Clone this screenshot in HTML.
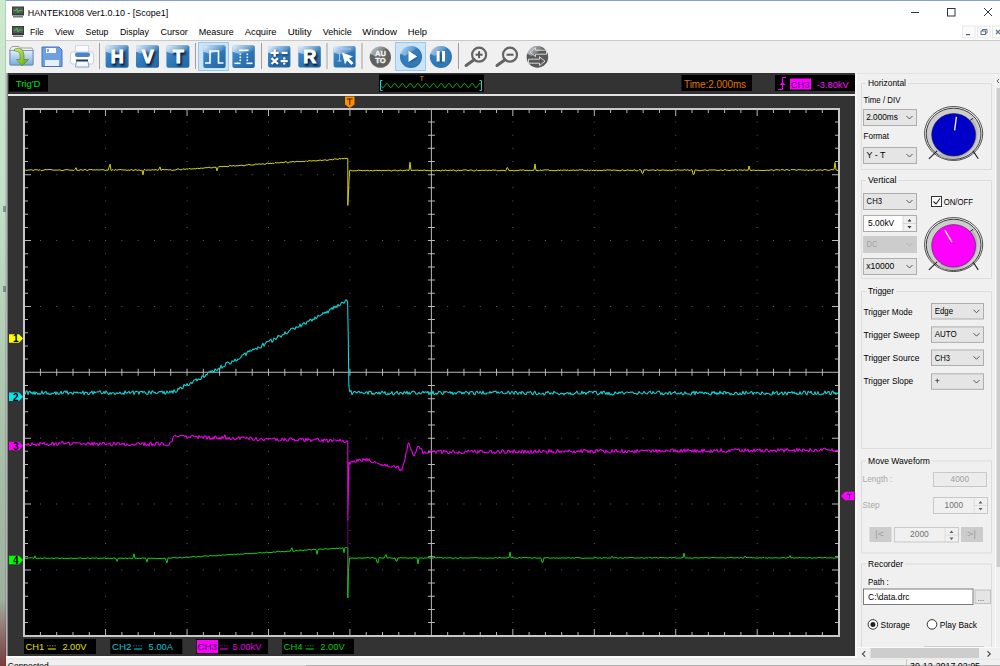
<!DOCTYPE html><html><head><meta charset="utf-8"><style>html,body{margin:0;padding:0;width:1000px;height:666px;overflow:hidden;background:#f0f0f0}svg{display:block}text{font-family:"Liberation Sans",sans-serif}</style></head><body><svg width="1000" height="666" viewBox="0 0 1000 666" font-family="Liberation Sans">
<defs>
<linearGradient id="desk" x1="0" y1="0" x2="0" y2="1">
 <stop offset="0" stop-color="#cdeacf"/><stop offset="0.3" stop-color="#c4e0c8"/>
 <stop offset="0.67" stop-color="#a8bfa8"/><stop offset="0.9" stop-color="#a0b0a0"/><stop offset="0.95" stop-color="#907070"/><stop offset="1" stop-color="#7a3c3c"/>
</linearGradient>
<linearGradient id="blu" x1="0" y1="0" x2="1" y2="1">
 <stop offset="0" stop-color="#4a92d0"/><stop offset="0.5" stop-color="#2e78b8"/><stop offset="1" stop-color="#2364a0"/>
</linearGradient>
<linearGradient id="shine" x1="0" y1="0" x2="1" y2="0.4">
 <stop offset="0" stop-color="#ffffff" stop-opacity="0.9"/><stop offset="0.6" stop-color="#cfe2f4" stop-opacity="0.5"/><stop offset="1" stop-color="#ffffff" stop-opacity="0.05"/>
</linearGradient>
<filter id="sh" x="-50%" y="-50%" width="200%" height="200%"><feGaussianBlur stdDeviation="1.3"/></filter>
<radialGradient id="gray" cx="0.5" cy="0.5" r="0.6">
 <stop offset="0" stop-color="#6a6a6a"/><stop offset="0.7" stop-color="#5e5e5e"/><stop offset="1" stop-color="#7a7a7a"/>
</radialGradient>
<radialGradient id="bluc" cx="0.45" cy="0.45" r="0.6">
 <stop offset="0" stop-color="#3c88c8"/><stop offset="0.8" stop-color="#3078b8"/><stop offset="1" stop-color="#2a68a8"/>
</radialGradient>
<linearGradient id="fold" x1="0" y1="0" x2="0" y2="1">
 <stop offset="0" stop-color="#e4eefa"/><stop offset="1" stop-color="#78ace0"/>
</linearGradient>
<linearGradient id="grn" x1="0" y1="0" x2="1" y2="1">
 <stop offset="0" stop-color="#d8f070"/><stop offset="1" stop-color="#58a010"/>
</linearGradient>
</defs>
<rect x="0" y="0" width="1000" height="666" fill="#f0f0f0" />
<rect x="0" y="0" width="6" height="666" fill="url(#desk)" />
<rect x="5" y="0" width="1" height="666" fill="#000" opacity="0.12"/>
<rect x="3" y="206" width="3" height="6" fill="#506070" opacity="0.6"/>
<rect x="3" y="286" width="3" height="6" fill="#506070" opacity="0.6"/>
<rect x="6" y="0" width="994" height="40" fill="#ffffff" />
<rect x="6" y="0" width="994" height="1" fill="#8a9fd8" />
<rect x="6" y="40" width="994" height="1" fill="#c8c8c8" />
<rect x="6" y="41" width="994" height="32" fill="#f0f0f0" />
<rect x="12" y="6.5" width="12" height="9" fill="#3a3a3a"/>
<rect x="13" y="7.5" width="10" height="6" fill="#505a50"/>
<polyline points="13.5,10.5 16,10.5 17,8.5 18,12.5 19,10.5 22.5,10.5" fill="none" stroke="#50d050" stroke-width="0.8"/>
<rect x="13" y="16.0" width="10" height="1.5" fill="#7a7a7a"/>
<rect x="12" y="26" width="12" height="9" fill="#3a3a3a"/>
<rect x="13" y="27" width="10" height="6" fill="#505a50"/>
<polyline points="13.5,30 16,30 17,28 18,32 19,30 22.5,30" fill="none" stroke="#50d050" stroke-width="0.8"/>
<rect x="13" y="35.5" width="10" height="1.5" fill="#7a7a7a"/>
<text x="27.8" y="15.6" font-size="9" fill="#000" textLength="140.4" lengthAdjust="spacingAndGlyphs" >HANTEK1008 Ver1.0.10 - [Scope1]</text>
<text x="30" y="35.2" font-size="9" fill="#000" textLength="13.8" lengthAdjust="spacingAndGlyphs" >File</text>
<text x="54.9" y="35.2" font-size="9" fill="#000" textLength="19.1" lengthAdjust="spacingAndGlyphs" >View</text>
<text x="85.6" y="35.2" font-size="9" fill="#000" textLength="22.8" lengthAdjust="spacingAndGlyphs" >Setup</text>
<text x="120" y="35.2" font-size="9" fill="#000" textLength="28.9" lengthAdjust="spacingAndGlyphs" >Display</text>
<text x="160.4" y="35.2" font-size="9" fill="#000" textLength="27.4" lengthAdjust="spacingAndGlyphs" >Cursor</text>
<text x="198.75" y="35.2" font-size="9" fill="#000" textLength="35.0" lengthAdjust="spacingAndGlyphs" >Measure</text>
<text x="244.7" y="35.2" font-size="9" fill="#000" textLength="31.8" lengthAdjust="spacingAndGlyphs" >Acquire</text>
<text x="287.8" y="35.2" font-size="9" fill="#000" textLength="23.8" lengthAdjust="spacingAndGlyphs" >Utility</text>
<text x="322.8" y="35.2" font-size="9" fill="#000" textLength="29.0" lengthAdjust="spacingAndGlyphs" >Vehicle</text>
<text x="362.3" y="35.2" font-size="9" fill="#000" textLength="34.7" lengthAdjust="spacingAndGlyphs" >Window</text>
<text x="407.8" y="35.2" font-size="9" fill="#000" textLength="19.2" lengthAdjust="spacingAndGlyphs" >Help</text>
<rect x="911" y="12" width="8" height="1" fill="#333" />
<rect x="947.5" y="8.5" width="7.5" height="7.5" fill="none" stroke="#333" stroke-width="1"/>
<path d="M984 8 L992 16 M992 8 L984 16" stroke="#333" stroke-width="1"/>
<rect x="962.5" y="26" width="12.5" height="12" fill="#fbfbfb" stroke="#e8e8e8" stroke-width="1"/>
<rect x="977.5" y="26" width="12.5" height="12" fill="#fbfbfb" stroke="#e8e8e8" stroke-width="1"/>
<rect x="992.5" y="26" width="12.5" height="12" fill="#fbfbfb" stroke="#e8e8e8" stroke-width="1"/>
<rect x="966" y="34" width="4" height="1.2" fill="#506080" />
<rect x="981" y="31" width="4.5" height="3.5" fill="none" stroke="#607090" stroke-width="1"/><path d="M982.5 31 v-1.5 h4.5 v3.5 h-1.5" fill="none" stroke="#607090" stroke-width="1"/>
<path d="M996 30 L1000 34 M1000 30 L996 34" stroke="#607090" stroke-width="1.2"/>
<path d="M10 49 L12 46.5 L19 46.5 L20.5 48 L32 48 L33 49.5 L33 65 L10 65 Z" fill="#f0f0f0" stroke="#8a8a8a" stroke-width="0.8"/>
<path d="M10 50.5 L33 50.5 L33 64.5 Q33 65 32 65 L11 65 Q10 65 10 64 Z" fill="url(#fold)" stroke="#5a86b8" stroke-width="0.8"/>
<path d="M14.5 49 Q23 46 24 55 L24 59.5 L28.5 59.5 L22 66 L16.5 59.5 L20 59.5 L20 55 Q20 51 14.5 51 Z" fill="url(#grn)" stroke="#4a8a10" stroke-width="0.6"/>
<path d="M42 47 L59 47 L62 50 L62 66.5 L42 66.5 Z" fill="#6e9fe0" stroke="#3f74c8" stroke-width="1"/>
<rect x="46" y="48" width="10" height="5" fill="#f4f8ff" />
<rect x="47" y="49" width="2" height="3" fill="#8aa8d8" />
<rect x="45" y="60" width="14" height="6" fill="#e8f0fc" />
<rect x="75.5" y="45.5" width="13" height="7" fill="#fafafa" stroke="#c8d4e4" stroke-width="0.8"/>
<rect x="70.5" y="52" width="23" height="12" rx="2" fill="#fcfcfc" stroke="#b8c8dc" stroke-width="0.8"/>
<rect x="75" y="52.5" width="15" height="4.5" rx="2" fill="#4a82cc"/>
<rect x="76" y="59.5" width="12" height="2" fill="#3a3a3a" />
<path d="M76.5 61.5 L88 61.5 L89 67 L75.5 67 Z" fill="#f8f8f8" stroke="#6090d0" stroke-width="0.8"/>
<rect x="99" y="43" width="1" height="26" fill="#a0a0a0" />
<rect x="105.6" y="45.2" width="23" height="22.5" rx="2" fill="url(#blu)"/>
<path d="M105.6 47.2 Q105.6 45.2 107.6 45.2 L125.6 45.2 Q128.6 45.2 128.6 48.2 L128.6 50.2 L111.6 53.7 L105.6 51.7 Z" fill="url(#shine)"/>
<text x="118.5" y="64.7" font-size="18" font-weight="bold" fill="#061a30" stroke="#061a30" stroke-width="1.5" text-anchor="middle" filter="url(#sh)">H</text>
<text x="117.3" y="63.2" font-size="18" fill="#fff" font-weight="bold" text-anchor="middle" stroke="#fff" stroke-width="1">H</text>
<rect x="136" y="45.2" width="23" height="22.5" rx="2" fill="url(#blu)"/>
<path d="M136 47.2 Q136 45.2 138 45.2 L156 45.2 Q159 45.2 159 48.2 L159 50.2 L142 53.7 L136 51.7 Z" fill="url(#shine)"/>
<text x="149.0" y="64.7" font-size="18" font-weight="bold" fill="#061a30" stroke="#061a30" stroke-width="1.5" text-anchor="middle" filter="url(#sh)">V</text>
<text x="147.8" y="63.2" font-size="18" fill="#fff" font-weight="bold" text-anchor="middle" stroke="#fff" stroke-width="1">V</text>
<rect x="166.4" y="45.2" width="23" height="22.5" rx="2" fill="url(#blu)"/>
<path d="M166.4 47.2 Q166.4 45.2 168.4 45.2 L186.4 45.2 Q189.4 45.2 189.4 48.2 L189.4 50.2 L172.4 53.7 L166.4 51.7 Z" fill="url(#shine)"/>
<text x="179.39999999999998" y="64.7" font-size="18" font-weight="bold" fill="#061a30" stroke="#061a30" stroke-width="1.5" text-anchor="middle" filter="url(#sh)">T</text>
<text x="178.2" y="63.2" font-size="18" fill="#fff" font-weight="bold" text-anchor="middle" stroke="#fff" stroke-width="1">T</text>
<rect x="195" y="43" width="1" height="26" fill="#a0a0a0" />
<rect x="198.5" y="42.5" width="30" height="28" fill="#cce4f7" stroke="#99c9ef" stroke-width="1"/>
<rect x="203.3" y="45.2" width="22.3" height="22.8" rx="2" fill="url(#blu)"/>
<path d="M203.3 47.2 Q203.3 45.2 205.3 45.2 L222.60000000000002 45.2 Q225.60000000000002 45.2 225.60000000000002 48.2 L225.60000000000002 50.2 L209.3 53.7 L203.3 51.7 Z" fill="url(#shine)"/>
<polyline points="205,63 210,63 210,51 218.5,51 218.5,63 223.5,63" fill="none" stroke="#fff" stroke-width="1.6"/>
<rect x="232.4" y="45.2" width="22.4" height="22.8" rx="2" fill="url(#blu)"/>
<path d="M232.4 47.2 Q232.4 45.2 234.4 45.2 L251.8 45.2 Q254.8 45.2 254.8 48.2 L254.8 50.2 L238.4 53.7 L232.4 51.7 Z" fill="url(#shine)"/>
<g fill="#fff"><rect x="239" y="49.5" width="9.5" height="1.6"/><rect x="234.5" y="62.5" width="6" height="1.6"/><rect x="246.5" y="62.5" width="6" height="1.6"/>
<rect x="239.5" y="53.5" width="1.6" height="1.6"/><rect x="246.5" y="53.5" width="1.6" height="1.6"/>
<rect x="239.5" y="56.5" width="1.6" height="1.6"/><rect x="246.5" y="56.5" width="1.6" height="1.6"/>
<rect x="239.5" y="59.5" width="1.6" height="1.6"/><rect x="246.5" y="59.5" width="1.6" height="1.6"/>
</g>
<rect x="261" y="43" width="1" height="26" fill="#a0a0a0" />
<rect x="268" y="45.9" width="22.4" height="21.6" rx="2" fill="url(#blu)"/>
<path d="M268 47.9 Q268 45.9 270 45.9 L287.4 45.9 Q290.4 45.9 290.4 48.9 L290.4 50.9 L274 54.4 L268 52.4 Z" fill="url(#shine)"/>
<g stroke="#08223c" stroke-width="3.2" opacity="0.55" filter="url(#sh)"><path d="M271.5 53.8 h8 M275.5 49.8 v8 M282 53.8 h6 M272 59 l6.5 6 M278.5 59 l-6.5 6 M281.5 62 h6.5"/></g>
<g stroke="#fff" stroke-width="2.3"><path d="M270.7 52.9 h8 M274.7 49.3 v7.5 M281.6 52.9 h6 M271.5 58.2 l6.5 5.8 M278 58.2 l-6.5 5.8 M280.7 61.1 h7"/></g><circle cx="284.2" cy="58.4" r="1.2" fill="#fff"/><circle cx="284.2" cy="63.6" r="1.2" fill="#fff"/>
<rect x="298.3" y="45.9" width="22.5" height="21.6" rx="2" fill="url(#blu)"/>
<path d="M298.3 47.9 Q298.3 45.9 300.3 45.9 L317.8 45.9 Q320.8 45.9 320.8 48.9 L320.8 50.9 L304.3 54.4 L298.3 52.4 Z" fill="url(#shine)"/>
<text x="311.0" y="64.7" font-size="18" font-weight="bold" fill="#061a30" stroke="#061a30" stroke-width="1.5" text-anchor="middle" filter="url(#sh)">R</text>
<text x="309.8" y="63.2" font-size="18" fill="#fff" font-weight="bold" text-anchor="middle" stroke="#fff" stroke-width="1">R</text>
<rect x="326.5" y="43" width="1" height="26" fill="#a0a0a0" />
<rect x="333.6" y="45.9" width="22" height="21.6" rx="2" fill="url(#blu)"/>
<path d="M333.6 47.9 Q333.6 45.9 335.6 45.9 L352.6 45.9 Q355.6 45.9 355.6 48.9 L355.6 50.9 L339.6 54.4 L333.6 52.4 Z" fill="url(#shine)"/>
<path d="M337 49 h14 M339.5 47.5 v14 M337.5 61 h4" stroke="#a8c8e8" stroke-width="1.1" fill="none"/>
<path d="M342 52.5 L353 56.5 L349 58.5 L353.5 63 L351.5 65 L347 60.5 L345 64.5 Z" fill="#fff"/>
<rect x="361.5" y="43" width="1" height="26" fill="#a0a0a0" />
<circle cx="380.35" cy="57.1" r="10.7" fill="url(#gray)"/>
<path d="M369.65000000000003 53.6 A 10.7 10.7 0 0 1 381.35 46.400000000000006 L386.77000000000004 48.54 L374.46500000000003 56.1 Z" fill="url(#shine)" opacity="0.85"/>
<text x="380.4" y="55.6" font-size="7.6" fill="#f4f4f4" font-weight="bold" text-anchor="middle" stroke="#f4f4f4" stroke-width="0.4">AU</text>
<text x="380.4" y="62.9" font-size="7.6" fill="#f4f4f4" font-weight="bold" text-anchor="middle" stroke="#f4f4f4" stroke-width="0.4">TO</text>
<rect x="395.5" y="42.5" width="30" height="28" fill="#cce4f7" stroke="#99c9ef" stroke-width="1"/>
<circle cx="411" cy="56.9" r="11" fill="url(#bluc)"/>
<path d="M400 53.4 A 11 11 0 0 1 412 45.9 L417.6 48.099999999999994 L404.95 55.9 Z" fill="url(#shine)" opacity="0.85"/>
<path d="M409.5 51.5 L409.5 63 L418 57.2 Z" fill="#08223c" opacity="0.5" filter="url(#sh)"/>
<path d="M408.5 50.8 L408.5 62 L417.2 56.4 Z" fill="#fff"/>
<circle cx="440.9" cy="56.9" r="11" fill="url(#bluc)"/>
<path d="M429.9 53.4 A 11 11 0 0 1 441.9 45.9 L447.5 48.099999999999994 L434.84999999999997 55.9 Z" fill="url(#shine)" opacity="0.85"/>
<rect x="437.5" y="52" width="5.2" height="11" fill="#08223c" opacity="0.4" filter="url(#sh)"/>
<rect x="436.6" y="51" width="3" height="10.5" fill="#fff" />
<rect x="442" y="51" width="3" height="10.5" fill="#fff" />
<rect x="458" y="43" width="1" height="26" fill="#a0a0a0" />
<circle cx="479.1" cy="54.7" r="7" fill="none" stroke="#646464" stroke-width="2.2"/>
<path d="M474.1 59.7 L466.1 65.5" stroke="#646464" stroke-width="3" stroke-linecap="round"/>
<path d="M475.6 54.7 h7" stroke="#5a5a5a" stroke-width="2"/>
<path d="M479.1 51.2 v7" stroke="#5a5a5a" stroke-width="2"/>
<circle cx="510" cy="54.7" r="7" fill="none" stroke="#646464" stroke-width="2.2"/>
<path d="M505 59.7 L497 65.5" stroke="#646464" stroke-width="3" stroke-linecap="round"/>
<path d="M506.5 54.7 h7" stroke="#5a5a5a" stroke-width="2"/>
<circle cx="537.4" cy="56.9" r="10.8" fill="#5a5a5a"/>
<path d="M526.6 53.4 A 10.8 10.8 0 0 1 538.4 46.099999999999994 L543.88 48.26 L531.4599999999999 55.9 Z" fill="url(#shine)" opacity="0.85"/>
<path d="M546.5 50.2 H535.5 V47.8 L530 52.2 L535.5 56.6 V54.2 H546.5 Z M528.5 59.2 H539.5 V56.8 L545 61.2 L539.5 65.6 V63.2 H528.5 Z" fill="none" stroke="#e4e4e4" stroke-width="0.9" stroke-linejoin="round"/>
<rect x="6" y="73" width="1.5" height="584" fill="#b4b4b8" />
<rect x="7.5" y="73" width="847.5" height="584" fill="#333333" />
<rect x="855" y="73" width="2" height="584" fill="#f8f8f8" />
<rect x="9" y="75" width="39" height="16.5" fill="#000" />
<text x="15.8" y="87" font-size="9.6" fill="#00e000" textLength="24.5" lengthAdjust="spacingAndGlyphs" >Trig'D</text>
<rect x="379" y="74.5" width="105" height="17.5" fill="#000" />
<path d="M382.5 80.5 H380.5 V90.5 H382.5 M479.5 80.5 H481.5 V90.5 H479.5" fill="none" stroke="#10d8e8" stroke-width="1"/>
<polyline points="381.50,86.16 382.00,86.85 382.50,87.32 383.00,87.50 383.50,87.35 384.00,86.91 384.50,86.23 385.00,85.44 385.50,84.66 386.00,84.01 386.50,83.60 387.00,83.51 387.50,83.73 388.00,84.24 388.50,84.96 389.00,85.76 389.50,86.52 390.00,87.12 390.50,87.45 391.00,87.47 391.50,87.16 392.00,86.59 392.50,85.84 393.00,85.04 393.50,84.31 394.00,83.77 394.50,83.51 395.00,83.58 395.50,83.96 396.00,84.58 396.50,85.36 397.00,86.16 397.50,86.85 398.00,87.32 398.50,87.50 399.00,87.35 399.50,86.91 400.00,86.23 400.50,85.44 401.00,84.66 401.50,84.01 402.00,83.60 402.50,83.51 403.00,83.73 403.50,84.24 404.00,84.96 404.50,85.76 405.00,86.52 405.50,87.12 406.00,87.45 406.50,87.47 407.00,87.16 407.50,86.59 408.00,85.84 408.50,85.04 409.00,84.31 409.50,83.77 410.00,83.51 410.50,83.58 411.00,83.96 411.50,84.58 412.00,85.36 412.50,86.16 413.00,86.85 413.50,87.32 414.00,87.50 414.50,87.35 415.00,86.91 415.50,86.23 416.00,85.44 416.50,84.66 417.00,84.01 417.50,83.60 418.00,83.51 418.50,83.73 419.00,84.24 419.50,84.96 420.00,85.76 420.50,86.52 421.00,87.12 421.50,87.45 422.00,87.47 422.50,87.16 423.00,86.59 423.50,85.84 424.00,85.04 424.50,84.31 425.00,83.77 425.50,83.51 426.00,83.58 426.50,83.96 427.00,84.58 427.50,85.36 428.00,86.16 428.50,86.85 429.00,87.32 429.50,87.50 430.00,87.35 430.50,86.91 431.00,86.23 431.50,85.44 432.00,84.66 432.50,84.01 433.00,83.60 433.50,83.51 434.00,83.73 434.50,84.24 435.00,84.96 435.50,85.76 436.00,86.52 436.50,87.12 437.00,87.45 437.50,87.47 438.00,87.16 438.50,86.59 439.00,85.84 439.50,85.04 440.00,84.31 440.50,83.77 441.00,83.51 441.50,83.58 442.00,83.96 442.50,84.58 443.00,85.36 443.50,86.16 444.00,86.85 444.50,87.32 445.00,87.50 445.50,87.35 446.00,86.91 446.50,86.23 447.00,85.44 447.50,84.66 448.00,84.01 448.50,83.60 449.00,83.51 449.50,83.73 450.00,84.24 450.50,84.96 451.00,85.76 451.50,86.52 452.00,87.12 452.50,87.45 453.00,87.47 453.50,87.16 454.00,86.59 454.50,85.84 455.00,85.04 455.50,84.31 456.00,83.77 456.50,83.51 457.00,83.58 457.50,83.96 458.00,84.58 458.50,85.36 459.00,86.16 459.50,86.85 460.00,87.32 460.50,87.50 461.00,87.35 461.50,86.91 462.00,86.23 462.50,85.44 463.00,84.66 463.50,84.01 464.00,83.60 464.50,83.51 465.00,83.73 465.50,84.24 466.00,84.96 466.50,85.76 467.00,86.52 467.50,87.12 468.00,87.45 468.50,87.47 469.00,87.16 469.50,86.59 470.00,85.84 470.50,85.04 471.00,84.31 471.50,83.77 472.00,83.51 472.50,83.58 473.00,83.96 473.50,84.58 474.00,85.36 474.50,86.16 475.00,86.85 475.50,87.32 476.00,87.50 476.50,87.35 477.00,86.91 477.50,86.23 478.00,85.44 478.50,84.66 479.00,84.01 479.50,83.60 480.00,83.51 480.50,83.73 481.00,84.24" fill="none" stroke="#18c018" stroke-width="1"/>
<text x="421.6" y="81" font-size="7.2" fill="#f08000" text-anchor="middle" >T</text>
<rect x="681.5" y="75" width="70.5" height="16" fill="#000" />
<text x="684" y="88" font-size="10" fill="#e07800" textLength="62" lengthAdjust="spacingAndGlyphs" >Time:2.000ms</text>
<rect x="775" y="75" width="80" height="16" fill="#000" />
<path d="M778 89.5 H782.5 V77.5 H786" fill="none" stroke="#ff00ff" stroke-width="1"/><path d="M779.8 85 L782.5 81.8 L785.2 85 Z" fill="#ff00ff"/>
<rect x="790" y="78.5" width="21" height="11" fill="#ff00ff" />
<text x="790.8" y="87.8" font-size="9.4" fill="#50007a" textLength="18.6" lengthAdjust="spacingAndGlyphs" >CH3</text>
<text x="816.7" y="88" font-size="9.6" fill="#ff10ff" textLength="32" lengthAdjust="spacingAndGlyphs" >-3.80kV</text>
<rect x="8" y="94" width="847" height="2" fill="#e4e4e4" />
<path d="M345 96.5 h9.5 v8 l-4.75 3.5 l-4.75 -3.5 Z" fill="#ff8c00"/>
<path d="M347 99 h5.5 M349.75 99 v6" stroke="#3a2000" stroke-width="1.1"/>
<rect x="23" y="108" width="817" height="529" fill="#c8c8c8" />
<rect x="25" y="110" width="813" height="525" fill="#000" />
<path d="M105.08 121.47h1v1h-1zM105.08 134.65h1v1h-1zM105.08 147.82h1v1h-1zM105.08 161.00h1v1h-1zM105.08 187.35h1v1h-1zM105.08 200.53h1v1h-1zM105.08 213.70h1v1h-1zM105.08 226.88h1v1h-1zM105.08 253.23h1v1h-1zM105.08 266.40h1v1h-1zM105.08 279.57h1v1h-1zM105.08 292.75h1v1h-1zM105.08 319.10h1v1h-1zM105.08 332.28h1v1h-1zM105.08 345.45h1v1h-1zM105.08 358.62h1v1h-1zM105.08 384.98h1v1h-1zM105.08 398.15h1v1h-1zM105.08 411.33h1v1h-1zM105.08 424.50h1v1h-1zM105.08 450.85h1v1h-1zM105.08 464.03h1v1h-1zM105.08 477.20h1v1h-1zM105.08 490.38h1v1h-1zM105.08 516.73h1v1h-1zM105.08 529.90h1v1h-1zM105.08 543.08h1v1h-1zM105.08 556.25h1v1h-1zM105.08 582.60h1v1h-1zM105.08 595.77h1v1h-1zM105.08 608.95h1v1h-1zM105.08 622.12h1v1h-1zM186.53 121.47h1v1h-1zM186.53 134.65h1v1h-1zM186.53 147.82h1v1h-1zM186.53 161.00h1v1h-1zM186.53 187.35h1v1h-1zM186.53 200.53h1v1h-1zM186.53 213.70h1v1h-1zM186.53 226.88h1v1h-1zM186.53 253.23h1v1h-1zM186.53 266.40h1v1h-1zM186.53 279.57h1v1h-1zM186.53 292.75h1v1h-1zM186.53 319.10h1v1h-1zM186.53 332.28h1v1h-1zM186.53 345.45h1v1h-1zM186.53 358.62h1v1h-1zM186.53 384.98h1v1h-1zM186.53 398.15h1v1h-1zM186.53 411.33h1v1h-1zM186.53 424.50h1v1h-1zM186.53 450.85h1v1h-1zM186.53 464.03h1v1h-1zM186.53 477.20h1v1h-1zM186.53 490.38h1v1h-1zM186.53 516.73h1v1h-1zM186.53 529.90h1v1h-1zM186.53 543.08h1v1h-1zM186.53 556.25h1v1h-1zM186.53 582.60h1v1h-1zM186.53 595.77h1v1h-1zM186.53 608.95h1v1h-1zM186.53 622.12h1v1h-1zM267.98 121.47h1v1h-1zM267.98 134.65h1v1h-1zM267.98 147.82h1v1h-1zM267.98 161.00h1v1h-1zM267.98 187.35h1v1h-1zM267.98 200.53h1v1h-1zM267.98 213.70h1v1h-1zM267.98 226.88h1v1h-1zM267.98 253.23h1v1h-1zM267.98 266.40h1v1h-1zM267.98 279.57h1v1h-1zM267.98 292.75h1v1h-1zM267.98 319.10h1v1h-1zM267.98 332.28h1v1h-1zM267.98 345.45h1v1h-1zM267.98 358.62h1v1h-1zM267.98 384.98h1v1h-1zM267.98 398.15h1v1h-1zM267.98 411.33h1v1h-1zM267.98 424.50h1v1h-1zM267.98 450.85h1v1h-1zM267.98 464.03h1v1h-1zM267.98 477.20h1v1h-1zM267.98 490.38h1v1h-1zM267.98 516.73h1v1h-1zM267.98 529.90h1v1h-1zM267.98 543.08h1v1h-1zM267.98 556.25h1v1h-1zM267.98 582.60h1v1h-1zM267.98 595.77h1v1h-1zM267.98 608.95h1v1h-1zM267.98 622.12h1v1h-1zM349.43 121.47h1v1h-1zM349.43 134.65h1v1h-1zM349.43 147.82h1v1h-1zM349.43 161.00h1v1h-1zM349.43 187.35h1v1h-1zM349.43 200.53h1v1h-1zM349.43 213.70h1v1h-1zM349.43 226.88h1v1h-1zM349.43 253.23h1v1h-1zM349.43 266.40h1v1h-1zM349.43 279.57h1v1h-1zM349.43 292.75h1v1h-1zM349.43 319.10h1v1h-1zM349.43 332.28h1v1h-1zM349.43 345.45h1v1h-1zM349.43 358.62h1v1h-1zM349.43 384.98h1v1h-1zM349.43 398.15h1v1h-1zM349.43 411.33h1v1h-1zM349.43 424.50h1v1h-1zM349.43 450.85h1v1h-1zM349.43 464.03h1v1h-1zM349.43 477.20h1v1h-1zM349.43 490.38h1v1h-1zM349.43 516.73h1v1h-1zM349.43 529.90h1v1h-1zM349.43 543.08h1v1h-1zM349.43 556.25h1v1h-1zM349.43 582.60h1v1h-1zM349.43 595.77h1v1h-1zM349.43 608.95h1v1h-1zM349.43 622.12h1v1h-1zM512.33 121.47h1v1h-1zM512.33 134.65h1v1h-1zM512.33 147.82h1v1h-1zM512.33 161.00h1v1h-1zM512.33 187.35h1v1h-1zM512.33 200.53h1v1h-1zM512.33 213.70h1v1h-1zM512.33 226.88h1v1h-1zM512.33 253.23h1v1h-1zM512.33 266.40h1v1h-1zM512.33 279.57h1v1h-1zM512.33 292.75h1v1h-1zM512.33 319.10h1v1h-1zM512.33 332.28h1v1h-1zM512.33 345.45h1v1h-1zM512.33 358.62h1v1h-1zM512.33 384.98h1v1h-1zM512.33 398.15h1v1h-1zM512.33 411.33h1v1h-1zM512.33 424.50h1v1h-1zM512.33 450.85h1v1h-1zM512.33 464.03h1v1h-1zM512.33 477.20h1v1h-1zM512.33 490.38h1v1h-1zM512.33 516.73h1v1h-1zM512.33 529.90h1v1h-1zM512.33 543.08h1v1h-1zM512.33 556.25h1v1h-1zM512.33 582.60h1v1h-1zM512.33 595.77h1v1h-1zM512.33 608.95h1v1h-1zM512.33 622.12h1v1h-1zM593.78 121.47h1v1h-1zM593.78 134.65h1v1h-1zM593.78 147.82h1v1h-1zM593.78 161.00h1v1h-1zM593.78 187.35h1v1h-1zM593.78 200.53h1v1h-1zM593.78 213.70h1v1h-1zM593.78 226.88h1v1h-1zM593.78 253.23h1v1h-1zM593.78 266.40h1v1h-1zM593.78 279.57h1v1h-1zM593.78 292.75h1v1h-1zM593.78 319.10h1v1h-1zM593.78 332.28h1v1h-1zM593.78 345.45h1v1h-1zM593.78 358.62h1v1h-1zM593.78 384.98h1v1h-1zM593.78 398.15h1v1h-1zM593.78 411.33h1v1h-1zM593.78 424.50h1v1h-1zM593.78 450.85h1v1h-1zM593.78 464.03h1v1h-1zM593.78 477.20h1v1h-1zM593.78 490.38h1v1h-1zM593.78 516.73h1v1h-1zM593.78 529.90h1v1h-1zM593.78 543.08h1v1h-1zM593.78 556.25h1v1h-1zM593.78 582.60h1v1h-1zM593.78 595.77h1v1h-1zM593.78 608.95h1v1h-1zM593.78 622.12h1v1h-1zM675.23 121.47h1v1h-1zM675.23 134.65h1v1h-1zM675.23 147.82h1v1h-1zM675.23 161.00h1v1h-1zM675.23 187.35h1v1h-1zM675.23 200.53h1v1h-1zM675.23 213.70h1v1h-1zM675.23 226.88h1v1h-1zM675.23 253.23h1v1h-1zM675.23 266.40h1v1h-1zM675.23 279.57h1v1h-1zM675.23 292.75h1v1h-1zM675.23 319.10h1v1h-1zM675.23 332.28h1v1h-1zM675.23 345.45h1v1h-1zM675.23 358.62h1v1h-1zM675.23 384.98h1v1h-1zM675.23 398.15h1v1h-1zM675.23 411.33h1v1h-1zM675.23 424.50h1v1h-1zM675.23 450.85h1v1h-1zM675.23 464.03h1v1h-1zM675.23 477.20h1v1h-1zM675.23 490.38h1v1h-1zM675.23 516.73h1v1h-1zM675.23 529.90h1v1h-1zM675.23 543.08h1v1h-1zM675.23 556.25h1v1h-1zM675.23 582.60h1v1h-1zM675.23 595.77h1v1h-1zM675.23 608.95h1v1h-1zM675.23 622.12h1v1h-1zM756.68 121.47h1v1h-1zM756.68 134.65h1v1h-1zM756.68 147.82h1v1h-1zM756.68 161.00h1v1h-1zM756.68 187.35h1v1h-1zM756.68 200.53h1v1h-1zM756.68 213.70h1v1h-1zM756.68 226.88h1v1h-1zM756.68 253.23h1v1h-1zM756.68 266.40h1v1h-1zM756.68 279.57h1v1h-1zM756.68 292.75h1v1h-1zM756.68 319.10h1v1h-1zM756.68 332.28h1v1h-1zM756.68 345.45h1v1h-1zM756.68 358.62h1v1h-1zM756.68 384.98h1v1h-1zM756.68 398.15h1v1h-1zM756.68 411.33h1v1h-1zM756.68 424.50h1v1h-1zM756.68 450.85h1v1h-1zM756.68 464.03h1v1h-1zM756.68 477.20h1v1h-1zM756.68 490.38h1v1h-1zM756.68 516.73h1v1h-1zM756.68 529.90h1v1h-1zM756.68 543.08h1v1h-1zM756.68 556.25h1v1h-1zM756.68 582.60h1v1h-1zM756.68 595.77h1v1h-1zM756.68 608.95h1v1h-1zM756.68 622.12h1v1h-1zM39.92 174.18h1v1h-1zM56.21 174.18h1v1h-1zM72.50 174.18h1v1h-1zM88.79 174.18h1v1h-1zM105.08 174.18h1v1h-1zM121.37 174.18h1v1h-1zM137.66 174.18h1v1h-1zM153.95 174.18h1v1h-1zM170.24 174.18h1v1h-1zM186.53 174.18h1v1h-1zM202.82 174.18h1v1h-1zM219.11 174.18h1v1h-1zM235.40 174.18h1v1h-1zM251.69 174.18h1v1h-1zM267.98 174.18h1v1h-1zM284.27 174.18h1v1h-1zM300.56 174.18h1v1h-1zM316.85 174.18h1v1h-1zM333.14 174.18h1v1h-1zM349.43 174.18h1v1h-1zM365.72 174.18h1v1h-1zM382.01 174.18h1v1h-1zM398.30 174.18h1v1h-1zM414.59 174.18h1v1h-1zM430.88 174.18h1v1h-1zM447.17 174.18h1v1h-1zM463.46 174.18h1v1h-1zM479.75 174.18h1v1h-1zM496.04 174.18h1v1h-1zM512.33 174.18h1v1h-1zM528.62 174.18h1v1h-1zM544.91 174.18h1v1h-1zM561.20 174.18h1v1h-1zM577.49 174.18h1v1h-1zM593.78 174.18h1v1h-1zM610.07 174.18h1v1h-1zM626.36 174.18h1v1h-1zM642.65 174.18h1v1h-1zM658.94 174.18h1v1h-1zM675.23 174.18h1v1h-1zM691.52 174.18h1v1h-1zM707.81 174.18h1v1h-1zM724.10 174.18h1v1h-1zM740.39 174.18h1v1h-1zM756.68 174.18h1v1h-1zM772.97 174.18h1v1h-1zM789.26 174.18h1v1h-1zM805.55 174.18h1v1h-1zM821.84 174.18h1v1h-1zM39.92 240.05h1v1h-1zM56.21 240.05h1v1h-1zM72.50 240.05h1v1h-1zM88.79 240.05h1v1h-1zM105.08 240.05h1v1h-1zM121.37 240.05h1v1h-1zM137.66 240.05h1v1h-1zM153.95 240.05h1v1h-1zM170.24 240.05h1v1h-1zM186.53 240.05h1v1h-1zM202.82 240.05h1v1h-1zM219.11 240.05h1v1h-1zM235.40 240.05h1v1h-1zM251.69 240.05h1v1h-1zM267.98 240.05h1v1h-1zM284.27 240.05h1v1h-1zM300.56 240.05h1v1h-1zM316.85 240.05h1v1h-1zM333.14 240.05h1v1h-1zM349.43 240.05h1v1h-1zM365.72 240.05h1v1h-1zM382.01 240.05h1v1h-1zM398.30 240.05h1v1h-1zM414.59 240.05h1v1h-1zM430.88 240.05h1v1h-1zM447.17 240.05h1v1h-1zM463.46 240.05h1v1h-1zM479.75 240.05h1v1h-1zM496.04 240.05h1v1h-1zM512.33 240.05h1v1h-1zM528.62 240.05h1v1h-1zM544.91 240.05h1v1h-1zM561.20 240.05h1v1h-1zM577.49 240.05h1v1h-1zM593.78 240.05h1v1h-1zM610.07 240.05h1v1h-1zM626.36 240.05h1v1h-1zM642.65 240.05h1v1h-1zM658.94 240.05h1v1h-1zM675.23 240.05h1v1h-1zM691.52 240.05h1v1h-1zM707.81 240.05h1v1h-1zM724.10 240.05h1v1h-1zM740.39 240.05h1v1h-1zM756.68 240.05h1v1h-1zM772.97 240.05h1v1h-1zM789.26 240.05h1v1h-1zM805.55 240.05h1v1h-1zM821.84 240.05h1v1h-1zM39.92 305.93h1v1h-1zM56.21 305.93h1v1h-1zM72.50 305.93h1v1h-1zM88.79 305.93h1v1h-1zM105.08 305.93h1v1h-1zM121.37 305.93h1v1h-1zM137.66 305.93h1v1h-1zM153.95 305.93h1v1h-1zM170.24 305.93h1v1h-1zM186.53 305.93h1v1h-1zM202.82 305.93h1v1h-1zM219.11 305.93h1v1h-1zM235.40 305.93h1v1h-1zM251.69 305.93h1v1h-1zM267.98 305.93h1v1h-1zM284.27 305.93h1v1h-1zM300.56 305.93h1v1h-1zM316.85 305.93h1v1h-1zM333.14 305.93h1v1h-1zM349.43 305.93h1v1h-1zM365.72 305.93h1v1h-1zM382.01 305.93h1v1h-1zM398.30 305.93h1v1h-1zM414.59 305.93h1v1h-1zM430.88 305.93h1v1h-1zM447.17 305.93h1v1h-1zM463.46 305.93h1v1h-1zM479.75 305.93h1v1h-1zM496.04 305.93h1v1h-1zM512.33 305.93h1v1h-1zM528.62 305.93h1v1h-1zM544.91 305.93h1v1h-1zM561.20 305.93h1v1h-1zM577.49 305.93h1v1h-1zM593.78 305.93h1v1h-1zM610.07 305.93h1v1h-1zM626.36 305.93h1v1h-1zM642.65 305.93h1v1h-1zM658.94 305.93h1v1h-1zM675.23 305.93h1v1h-1zM691.52 305.93h1v1h-1zM707.81 305.93h1v1h-1zM724.10 305.93h1v1h-1zM740.39 305.93h1v1h-1zM756.68 305.93h1v1h-1zM772.97 305.93h1v1h-1zM789.26 305.93h1v1h-1zM805.55 305.93h1v1h-1zM821.84 305.93h1v1h-1zM39.92 437.68h1v1h-1zM56.21 437.68h1v1h-1zM72.50 437.68h1v1h-1zM88.79 437.68h1v1h-1zM105.08 437.68h1v1h-1zM121.37 437.68h1v1h-1zM137.66 437.68h1v1h-1zM153.95 437.68h1v1h-1zM170.24 437.68h1v1h-1zM186.53 437.68h1v1h-1zM202.82 437.68h1v1h-1zM219.11 437.68h1v1h-1zM235.40 437.68h1v1h-1zM251.69 437.68h1v1h-1zM267.98 437.68h1v1h-1zM284.27 437.68h1v1h-1zM300.56 437.68h1v1h-1zM316.85 437.68h1v1h-1zM333.14 437.68h1v1h-1zM349.43 437.68h1v1h-1zM365.72 437.68h1v1h-1zM382.01 437.68h1v1h-1zM398.30 437.68h1v1h-1zM414.59 437.68h1v1h-1zM430.88 437.68h1v1h-1zM447.17 437.68h1v1h-1zM463.46 437.68h1v1h-1zM479.75 437.68h1v1h-1zM496.04 437.68h1v1h-1zM512.33 437.68h1v1h-1zM528.62 437.68h1v1h-1zM544.91 437.68h1v1h-1zM561.20 437.68h1v1h-1zM577.49 437.68h1v1h-1zM593.78 437.68h1v1h-1zM610.07 437.68h1v1h-1zM626.36 437.68h1v1h-1zM642.65 437.68h1v1h-1zM658.94 437.68h1v1h-1zM675.23 437.68h1v1h-1zM691.52 437.68h1v1h-1zM707.81 437.68h1v1h-1zM724.10 437.68h1v1h-1zM740.39 437.68h1v1h-1zM756.68 437.68h1v1h-1zM772.97 437.68h1v1h-1zM789.26 437.68h1v1h-1zM805.55 437.68h1v1h-1zM821.84 437.68h1v1h-1zM39.92 503.55h1v1h-1zM56.21 503.55h1v1h-1zM72.50 503.55h1v1h-1zM88.79 503.55h1v1h-1zM105.08 503.55h1v1h-1zM121.37 503.55h1v1h-1zM137.66 503.55h1v1h-1zM153.95 503.55h1v1h-1zM170.24 503.55h1v1h-1zM186.53 503.55h1v1h-1zM202.82 503.55h1v1h-1zM219.11 503.55h1v1h-1zM235.40 503.55h1v1h-1zM251.69 503.55h1v1h-1zM267.98 503.55h1v1h-1zM284.27 503.55h1v1h-1zM300.56 503.55h1v1h-1zM316.85 503.55h1v1h-1zM333.14 503.55h1v1h-1zM349.43 503.55h1v1h-1zM365.72 503.55h1v1h-1zM382.01 503.55h1v1h-1zM398.30 503.55h1v1h-1zM414.59 503.55h1v1h-1zM430.88 503.55h1v1h-1zM447.17 503.55h1v1h-1zM463.46 503.55h1v1h-1zM479.75 503.55h1v1h-1zM496.04 503.55h1v1h-1zM512.33 503.55h1v1h-1zM528.62 503.55h1v1h-1zM544.91 503.55h1v1h-1zM561.20 503.55h1v1h-1zM577.49 503.55h1v1h-1zM593.78 503.55h1v1h-1zM610.07 503.55h1v1h-1zM626.36 503.55h1v1h-1zM642.65 503.55h1v1h-1zM658.94 503.55h1v1h-1zM675.23 503.55h1v1h-1zM691.52 503.55h1v1h-1zM707.81 503.55h1v1h-1zM724.10 503.55h1v1h-1zM740.39 503.55h1v1h-1zM756.68 503.55h1v1h-1zM772.97 503.55h1v1h-1zM789.26 503.55h1v1h-1zM805.55 503.55h1v1h-1zM821.84 503.55h1v1h-1zM39.92 569.42h1v1h-1zM56.21 569.42h1v1h-1zM72.50 569.42h1v1h-1zM88.79 569.42h1v1h-1zM105.08 569.42h1v1h-1zM121.37 569.42h1v1h-1zM137.66 569.42h1v1h-1zM153.95 569.42h1v1h-1zM170.24 569.42h1v1h-1zM186.53 569.42h1v1h-1zM202.82 569.42h1v1h-1zM219.11 569.42h1v1h-1zM235.40 569.42h1v1h-1zM251.69 569.42h1v1h-1zM267.98 569.42h1v1h-1zM284.27 569.42h1v1h-1zM300.56 569.42h1v1h-1zM316.85 569.42h1v1h-1zM333.14 569.42h1v1h-1zM349.43 569.42h1v1h-1zM365.72 569.42h1v1h-1zM382.01 569.42h1v1h-1zM398.30 569.42h1v1h-1zM414.59 569.42h1v1h-1zM430.88 569.42h1v1h-1zM447.17 569.42h1v1h-1zM463.46 569.42h1v1h-1zM479.75 569.42h1v1h-1zM496.04 569.42h1v1h-1zM512.33 569.42h1v1h-1zM528.62 569.42h1v1h-1zM544.91 569.42h1v1h-1zM561.20 569.42h1v1h-1zM577.49 569.42h1v1h-1zM593.78 569.42h1v1h-1zM610.07 569.42h1v1h-1zM626.36 569.42h1v1h-1zM642.65 569.42h1v1h-1zM658.94 569.42h1v1h-1zM675.23 569.42h1v1h-1zM691.52 569.42h1v1h-1zM707.81 569.42h1v1h-1zM724.10 569.42h1v1h-1zM740.39 569.42h1v1h-1zM756.68 569.42h1v1h-1zM772.97 569.42h1v1h-1zM789.26 569.42h1v1h-1zM805.55 569.42h1v1h-1zM821.84 569.42h1v1h-1z" fill="#5e5e5e"/>
<path d="M430.88 110h1v525h-1zM25 371.80h813v1h-813zM39.92 110h1v3h-1z M39.92 632h1v3h-1zM39.92 368.80h1v7h-1zM56.21 110h1v3h-1z M56.21 632h1v3h-1zM56.21 368.80h1v7h-1zM72.50 110h1v3h-1z M72.50 632h1v3h-1zM72.50 368.80h1v7h-1zM88.79 110h1v3h-1z M88.79 632h1v3h-1zM88.79 368.80h1v7h-1zM105.08 110h1v6h-1z M105.08 629h1v6h-1zM105.08 368.80h1v7h-1zM121.37 110h1v3h-1z M121.37 632h1v3h-1zM121.37 368.80h1v7h-1zM137.66 110h1v3h-1z M137.66 632h1v3h-1zM137.66 368.80h1v7h-1zM153.95 110h1v3h-1z M153.95 632h1v3h-1zM153.95 368.80h1v7h-1zM170.24 110h1v3h-1z M170.24 632h1v3h-1zM170.24 368.80h1v7h-1zM186.53 110h1v6h-1z M186.53 629h1v6h-1zM186.53 368.80h1v7h-1zM202.82 110h1v3h-1z M202.82 632h1v3h-1zM202.82 368.80h1v7h-1zM219.11 110h1v3h-1z M219.11 632h1v3h-1zM219.11 368.80h1v7h-1zM235.40 110h1v3h-1z M235.40 632h1v3h-1zM235.40 368.80h1v7h-1zM251.69 110h1v3h-1z M251.69 632h1v3h-1zM251.69 368.80h1v7h-1zM267.98 110h1v6h-1z M267.98 629h1v6h-1zM267.98 368.80h1v7h-1zM284.27 110h1v3h-1z M284.27 632h1v3h-1zM284.27 368.80h1v7h-1zM300.56 110h1v3h-1z M300.56 632h1v3h-1zM300.56 368.80h1v7h-1zM316.85 110h1v3h-1z M316.85 632h1v3h-1zM316.85 368.80h1v7h-1zM333.14 110h1v3h-1z M333.14 632h1v3h-1zM333.14 368.80h1v7h-1zM349.43 110h1v6h-1z M349.43 629h1v6h-1zM349.43 368.80h1v7h-1zM365.72 110h1v3h-1z M365.72 632h1v3h-1zM365.72 368.80h1v7h-1zM382.01 110h1v3h-1z M382.01 632h1v3h-1zM382.01 368.80h1v7h-1zM398.30 110h1v3h-1z M398.30 632h1v3h-1zM398.30 368.80h1v7h-1zM414.59 110h1v3h-1z M414.59 632h1v3h-1zM414.59 368.80h1v7h-1zM430.88 110h1v6h-1z M430.88 629h1v6h-1zM447.17 110h1v3h-1z M447.17 632h1v3h-1zM447.17 368.80h1v7h-1zM463.46 110h1v3h-1z M463.46 632h1v3h-1zM463.46 368.80h1v7h-1zM479.75 110h1v3h-1z M479.75 632h1v3h-1zM479.75 368.80h1v7h-1zM496.04 110h1v3h-1z M496.04 632h1v3h-1zM496.04 368.80h1v7h-1zM512.33 110h1v6h-1z M512.33 629h1v6h-1zM512.33 368.80h1v7h-1zM528.62 110h1v3h-1z M528.62 632h1v3h-1zM528.62 368.80h1v7h-1zM544.91 110h1v3h-1z M544.91 632h1v3h-1zM544.91 368.80h1v7h-1zM561.20 110h1v3h-1z M561.20 632h1v3h-1zM561.20 368.80h1v7h-1zM577.49 110h1v3h-1z M577.49 632h1v3h-1zM577.49 368.80h1v7h-1zM593.78 110h1v6h-1z M593.78 629h1v6h-1zM593.78 368.80h1v7h-1zM610.07 110h1v3h-1z M610.07 632h1v3h-1zM610.07 368.80h1v7h-1zM626.36 110h1v3h-1z M626.36 632h1v3h-1zM626.36 368.80h1v7h-1zM642.65 110h1v3h-1z M642.65 632h1v3h-1zM642.65 368.80h1v7h-1zM658.94 110h1v3h-1z M658.94 632h1v3h-1zM658.94 368.80h1v7h-1zM675.23 110h1v6h-1z M675.23 629h1v6h-1zM675.23 368.80h1v7h-1zM691.52 110h1v3h-1z M691.52 632h1v3h-1zM691.52 368.80h1v7h-1zM707.81 110h1v3h-1z M707.81 632h1v3h-1zM707.81 368.80h1v7h-1zM724.10 110h1v3h-1z M724.10 632h1v3h-1zM724.10 368.80h1v7h-1zM740.39 110h1v3h-1z M740.39 632h1v3h-1zM740.39 368.80h1v7h-1zM756.68 110h1v6h-1z M756.68 629h1v6h-1zM756.68 368.80h1v7h-1zM772.97 110h1v3h-1z M772.97 632h1v3h-1zM772.97 368.80h1v7h-1zM789.26 110h1v3h-1z M789.26 632h1v3h-1zM789.26 368.80h1v7h-1zM805.55 110h1v3h-1z M805.55 632h1v3h-1zM805.55 368.80h1v7h-1zM821.84 110h1v3h-1z M821.84 632h1v3h-1zM821.84 368.80h1v7h-1zM25 121.47h3v1h-3z M835 121.47h3v1h-3zM427.88 121.47h7v1h-7zM25 134.65h3v1h-3z M835 134.65h3v1h-3zM427.88 134.65h7v1h-7zM25 147.82h3v1h-3z M835 147.82h3v1h-3zM427.88 147.82h7v1h-7zM25 161.00h3v1h-3z M835 161.00h3v1h-3zM427.88 161.00h7v1h-7zM25 174.18h6v1h-6z M832 174.18h6v1h-6zM427.88 174.18h7v1h-7zM25 187.35h3v1h-3z M835 187.35h3v1h-3zM427.88 187.35h7v1h-7zM25 200.53h3v1h-3z M835 200.53h3v1h-3zM427.88 200.53h7v1h-7zM25 213.70h3v1h-3z M835 213.70h3v1h-3zM427.88 213.70h7v1h-7zM25 226.88h3v1h-3z M835 226.88h3v1h-3zM427.88 226.88h7v1h-7zM25 240.05h6v1h-6z M832 240.05h6v1h-6zM427.88 240.05h7v1h-7zM25 253.23h3v1h-3z M835 253.23h3v1h-3zM427.88 253.23h7v1h-7zM25 266.40h3v1h-3z M835 266.40h3v1h-3zM427.88 266.40h7v1h-7zM25 279.57h3v1h-3z M835 279.57h3v1h-3zM427.88 279.57h7v1h-7zM25 292.75h3v1h-3z M835 292.75h3v1h-3zM427.88 292.75h7v1h-7zM25 305.93h6v1h-6z M832 305.93h6v1h-6zM427.88 305.93h7v1h-7zM25 319.10h3v1h-3z M835 319.10h3v1h-3zM427.88 319.10h7v1h-7zM25 332.28h3v1h-3z M835 332.28h3v1h-3zM427.88 332.28h7v1h-7zM25 345.45h3v1h-3z M835 345.45h3v1h-3zM427.88 345.45h7v1h-7zM25 358.62h3v1h-3z M835 358.62h3v1h-3zM427.88 358.62h7v1h-7zM25 371.80h6v1h-6z M832 371.80h6v1h-6zM25 384.98h3v1h-3z M835 384.98h3v1h-3zM427.88 384.98h7v1h-7zM25 398.15h3v1h-3z M835 398.15h3v1h-3zM427.88 398.15h7v1h-7zM25 411.33h3v1h-3z M835 411.33h3v1h-3zM427.88 411.33h7v1h-7zM25 424.50h3v1h-3z M835 424.50h3v1h-3zM427.88 424.50h7v1h-7zM25 437.68h6v1h-6z M832 437.68h6v1h-6zM427.88 437.68h7v1h-7zM25 450.85h3v1h-3z M835 450.85h3v1h-3zM427.88 450.85h7v1h-7zM25 464.03h3v1h-3z M835 464.03h3v1h-3zM427.88 464.03h7v1h-7zM25 477.20h3v1h-3z M835 477.20h3v1h-3zM427.88 477.20h7v1h-7zM25 490.38h3v1h-3z M835 490.38h3v1h-3zM427.88 490.38h7v1h-7zM25 503.55h6v1h-6z M832 503.55h6v1h-6zM427.88 503.55h7v1h-7zM25 516.73h3v1h-3z M835 516.73h3v1h-3zM427.88 516.73h7v1h-7zM25 529.90h3v1h-3z M835 529.90h3v1h-3zM427.88 529.90h7v1h-7zM25 543.08h3v1h-3z M835 543.08h3v1h-3zM427.88 543.08h7v1h-7zM25 556.25h3v1h-3z M835 556.25h3v1h-3zM427.88 556.25h7v1h-7zM25 569.42h6v1h-6z M832 569.42h6v1h-6zM427.88 569.42h7v1h-7zM25 582.60h3v1h-3z M835 582.60h3v1h-3zM427.88 582.60h7v1h-7zM25 595.77h3v1h-3z M835 595.77h3v1h-3zM427.88 595.77h7v1h-7zM25 608.95h3v1h-3z M835 608.95h3v1h-3zM427.88 608.95h7v1h-7zM25 622.12h3v1h-3z M835 622.12h3v1h-3zM427.88 622.12h7v1h-7z" fill="#b8b8b8"/>
<polyline points="25.0,169.9 26.0,170.1 27.0,170.5 28.0,170.0 29.0,170.0 30.0,170.1 31.0,169.6 32.0,170.0 33.0,170.2 34.0,170.4 35.0,169.5 36.0,169.8 37.0,169.5 38.0,170.4 39.0,170.2 40.0,169.5 41.0,170.6 42.0,170.6 43.0,170.2 44.0,170.1 45.0,169.6 46.0,169.4 47.0,170.0 48.0,169.5 49.0,169.6 50.0,169.7 51.0,169.4 52.0,170.0 53.0,169.9 54.0,170.4 55.0,170.0 56.0,170.2 57.0,170.0 58.0,170.2 59.0,169.9 60.0,169.7 61.0,170.6 62.0,170.6 63.0,170.4 64.0,170.2 65.0,169.8 66.0,169.7 67.0,169.7 68.0,169.5 69.0,170.3 70.0,169.9 71.0,170.4 72.0,169.9 73.0,170.5 74.0,170.4 75.0,169.4 76.0,167.7 77.0,170.5 78.0,170.0 79.0,170.6 80.0,169.9 81.0,169.5 82.0,170.2 83.0,170.3 84.0,169.7 85.0,169.5 86.0,169.8 87.0,170.6 88.0,170.3 89.0,169.5 90.0,169.7 91.0,169.5 92.0,169.5 93.0,170.4 94.0,169.6 95.0,170.1 96.0,169.9 97.0,169.6 98.0,170.3 99.0,169.6 100.0,170.2 101.0,169.5 102.0,169.9 103.0,169.7 104.0,169.7 105.0,170.6 106.0,170.4 107.0,169.8 108.0,170.5 109.0,167.2 110.0,164.2 111.0,170.4 112.0,170.2 113.0,169.5 114.0,170.6 115.0,169.7 116.0,169.7 117.0,170.3 118.0,169.8 119.0,169.8 120.0,169.5 121.0,169.5 122.0,170.1 123.0,169.7 124.0,170.1 125.0,169.8 126.0,169.9 127.0,170.6 128.0,170.0 129.0,170.1 130.0,170.4 131.0,169.6 132.0,169.6 133.0,170.5 134.0,170.4 135.0,169.7 136.0,169.6 137.0,170.3 138.0,170.5 139.0,169.6 140.0,170.5 141.0,170.5 142.0,170.2 143.0,174.9 144.0,169.6 145.0,169.4 146.0,170.6 147.0,169.7 148.0,170.2 149.0,169.7 150.0,170.4 151.0,170.1 152.0,169.8 153.0,169.6 154.0,170.3 155.0,169.5 156.0,169.7 157.0,170.1 158.0,170.4 159.0,168.9 160.0,166.9 161.0,170.5 162.0,169.6 163.0,169.4 164.0,169.7 165.0,169.9 166.0,169.5 167.0,169.6 168.0,169.8 169.0,170.1 170.0,169.6 171.0,169.8 172.0,170.4 173.0,170.4 174.0,170.0 175.0,170.0 176.0,169.8 177.0,169.2 178.0,169.0 179.0,168.9 180.0,169.9 181.0,169.6 182.0,169.8 183.0,168.6 184.0,169.3 185.0,169.1 186.0,169.3 187.0,168.7 188.0,169.5 189.0,168.3 190.0,168.8 191.0,169.0 192.0,169.1 193.0,168.8 194.0,168.7 195.0,168.8 196.0,168.9 197.0,168.1 198.0,168.4 199.0,168.6 200.0,168.5 201.0,167.9 202.0,168.3 203.0,168.3 204.0,167.9 205.0,167.9 206.0,167.6 207.0,167.7 208.0,167.7 209.0,167.0 210.0,167.6 211.0,168.0 212.0,167.8 213.0,167.5 214.0,167.0 215.0,167.4 216.0,167.2 217.0,170.9 218.0,167.4 219.0,166.3 220.0,167.1 221.0,166.1 222.0,166.8 223.0,166.6 224.0,166.2 225.0,166.7 226.0,166.4 227.0,166.5 228.0,166.8 229.0,165.9 230.0,165.5 231.0,165.8 232.0,166.2 233.0,165.6 234.0,165.5 235.0,166.3 236.0,165.9 237.0,165.6 238.0,166.1 239.0,165.3 240.0,165.7 241.0,165.0 242.0,165.3 243.0,165.6 244.0,165.7 245.0,165.6 246.0,164.9 247.0,165.1 248.0,164.7 249.0,164.4 250.0,164.8 251.0,165.1 252.0,165.1 253.0,164.9 254.0,165.1 255.0,164.2 256.0,164.0 257.0,164.3 258.0,164.0 259.0,163.9 260.0,164.0 261.0,164.2 262.0,164.0 263.0,163.7 264.0,164.3 265.0,164.4 266.0,163.7 267.0,163.2 268.0,163.1 269.0,164.0 270.0,162.9 271.0,163.7 272.0,163.4 273.0,163.1 274.0,163.6 275.0,162.6 276.0,162.7 277.0,163.0 278.0,162.4 279.0,163.3 280.0,162.5 281.0,162.3 282.0,162.2 283.0,162.8 284.0,162.5 285.0,162.0 286.0,161.2 287.0,162.7 288.0,162.9 289.0,162.5 290.0,161.8 291.0,162.1 292.0,161.7 293.0,161.4 294.0,161.9 295.0,162.1 296.0,161.4 297.0,161.4 298.0,161.5 299.0,161.8 300.0,161.5 301.0,161.6 302.0,161.7 303.0,161.2 304.0,161.6 305.0,161.7 306.0,160.6 307.0,161.6 308.0,161.3 309.0,160.5 310.0,160.8 311.0,160.9 312.0,161.2 313.0,160.5 314.0,160.7 315.0,161.0 316.0,160.8 317.0,160.9 318.0,160.3 319.0,160.5 320.0,159.9 321.0,160.4 322.0,160.5 323.0,160.2 324.0,160.2 325.0,159.5 326.0,160.3 327.0,160.3 328.0,160.3 329.0,159.7 330.0,159.9 331.0,159.3 332.0,159.9 333.0,159.8 334.0,159.1 335.0,158.7 336.0,159.1 337.0,159.2 338.0,159.3 339.0,158.9 340.0,158.3 341.0,159.2 342.0,158.2 343.0,159.1 344.0,158.2 345.0,158.4 346.0,158.8 347.0,158.0 347.8,158.4 347.8,205.5 348.6,190.0 349.5,171.0 350.0,170.1 351.0,170.5 352.0,170.8 353.0,170.9 354.0,170.7 355.0,171.0 356.0,170.5 357.0,171.0 358.0,170.0 359.0,170.2 360.0,170.5 361.0,170.2 362.0,170.8 363.0,170.7 364.0,170.5 365.0,170.9 366.0,170.6 367.0,170.3 368.0,170.3 369.0,170.9 370.0,171.0 371.0,170.1 372.0,170.9 373.0,171.0 374.0,170.5 375.0,170.6 376.0,170.1 377.0,170.5 378.0,170.5 379.0,170.6 380.0,169.9 381.0,171.0 382.0,170.5 383.0,170.3 384.0,170.8 385.0,170.5 386.0,170.5 387.0,170.7 388.0,169.9 389.0,170.5 390.0,170.4 391.0,171.0 392.0,171.0 393.0,170.2 394.0,170.4 395.0,170.0 396.0,170.4 397.0,170.8 398.0,170.9 399.0,170.4 400.0,170.2 401.0,170.1 402.0,170.6 403.0,171.0 404.0,170.0 405.0,170.8 406.0,169.9 407.0,170.1 408.0,170.1 409.0,170.6 410.0,162.2 411.0,170.2 412.0,170.6 413.0,170.0 414.0,170.7 415.0,170.0 416.0,170.4 417.0,170.1 418.0,170.1 419.0,170.5 420.0,170.4 421.0,170.3 422.0,170.3 423.0,170.5 424.0,170.0 425.0,170.1 426.0,170.6 427.0,170.6 428.0,170.5 429.0,170.8 430.0,170.6 431.0,170.8 432.0,170.1 433.0,170.7 434.0,170.8 435.0,170.9 436.0,170.2 437.0,170.2 438.0,170.9 439.0,170.1 440.0,171.0 441.0,170.9 442.0,170.0 443.0,170.1 444.0,170.7 445.0,170.1 446.0,169.9 447.0,170.8 448.0,170.3 449.0,170.7 450.0,169.9 451.0,170.3 452.0,170.6 453.0,169.8 454.0,170.0 455.0,170.6 456.0,170.9 457.0,171.0 458.0,169.9 459.0,170.4 460.0,170.7 461.0,170.4 462.0,170.6 463.0,170.0 464.0,169.9 465.0,169.9 466.0,169.8 467.0,170.4 468.0,170.4 469.0,170.5 470.0,170.0 471.0,170.0 472.0,170.0 473.0,170.8 474.0,171.0 475.0,170.9 476.0,169.9 477.0,169.8 478.0,170.9 479.0,170.3 480.0,170.7 481.0,170.2 482.0,170.3 483.0,170.4 484.0,170.3 485.0,170.5 486.0,169.8 487.0,170.6 488.0,170.8 489.0,170.0 490.0,170.3 491.0,170.6 492.0,170.2 493.0,170.0 494.0,170.0 495.0,170.4 496.0,169.8 497.0,170.8 498.0,170.7 499.0,170.6 500.0,170.8 501.0,170.5 502.0,170.2 503.0,170.5 504.0,170.3 505.0,170.9 506.0,170.7 507.0,167.5 508.0,168.3 509.0,170.6 510.0,170.7 511.0,170.7 512.0,170.2 513.0,170.8 514.0,170.8 515.0,170.6 516.0,170.7 517.0,170.6 518.0,170.2 519.0,170.6 520.0,169.8 521.0,170.1 522.0,170.3 523.0,169.7 524.0,170.1 525.0,170.5 526.0,170.5 527.0,170.0 528.0,170.9 529.0,170.5 530.0,170.1 531.0,170.5 532.0,170.4 533.0,170.4 534.0,170.1 535.0,163.9 536.0,170.4 537.0,170.5 538.0,170.6 539.0,170.9 540.0,169.7 541.0,170.4 542.0,170.6 543.0,170.0 544.0,170.2 545.0,169.8 546.0,169.9 547.0,170.1 548.0,169.8 549.0,170.0 550.0,170.8 551.0,170.4 552.0,170.3 553.0,170.9 554.0,170.4 555.0,170.9 556.0,170.5 557.0,170.7 558.0,169.8 559.0,170.4 560.0,170.6 561.0,169.7 562.0,170.8 563.0,169.9 564.0,170.2 565.0,169.9 566.0,170.3 567.0,170.4 568.0,169.7 569.0,170.8 570.0,170.2 571.0,170.3 572.0,170.4 573.0,170.1 574.0,170.0 575.0,170.5 576.0,170.3 577.0,170.0 578.0,170.5 579.0,170.0 580.0,169.7 581.0,170.0 582.0,169.7 583.0,169.8 584.0,170.6 585.0,170.1 586.0,170.7 587.0,170.6 588.0,169.7 589.0,170.8 590.0,170.8 591.0,169.7 592.0,170.7 593.0,170.2 594.0,170.2 595.0,170.8 596.0,169.9 597.0,170.3 598.0,170.8 599.0,170.5 600.0,170.2 601.0,170.8 602.0,170.6 603.0,170.4 604.0,169.8 605.0,170.4 606.0,170.2 607.0,169.9 608.0,169.7 609.0,170.3 610.0,169.8 611.0,170.2 612.0,170.4 613.0,170.2 614.0,169.9 615.0,170.3 616.0,170.1 617.0,170.6 618.0,170.3 619.0,170.8 620.0,170.8 621.0,170.5 622.0,169.9 623.0,169.8 624.0,170.7 625.0,170.6 626.0,170.4 627.0,170.0 628.0,169.9 629.0,170.4 630.0,170.3 631.0,170.3 632.0,170.4 633.0,170.5 634.0,169.8 635.0,169.9 636.0,170.8 637.0,170.7 638.0,170.7 639.0,169.7 640.0,169.7 641.0,169.9 642.0,173.1 643.0,173.4 644.0,169.7 645.0,170.2 646.0,169.7 647.0,169.7 648.0,170.4 649.0,170.3 650.0,170.3 651.0,170.0 652.0,170.2 653.0,169.8 654.0,170.0 655.0,170.5 656.0,170.6 657.0,169.7 658.0,169.7 659.0,170.6 660.0,170.3 661.0,170.5 662.0,169.8 663.0,170.1 664.0,169.9 665.0,170.5 666.0,170.0 667.0,170.4 668.0,170.8 669.0,170.0 670.0,170.2 671.0,170.5 672.0,170.7 673.0,170.1 674.0,170.0 675.0,169.7 676.0,170.6 677.0,169.7 678.0,169.7 679.0,170.2 680.0,170.1 681.0,170.4 682.0,169.9 683.0,170.5 684.0,169.6 685.0,169.8 686.0,170.4 687.0,169.7 688.0,169.9 689.0,170.4 690.0,170.4 691.0,169.9 692.0,169.7 693.0,174.0 694.0,174.5 695.0,170.0 696.0,169.7 697.0,170.4 698.0,170.2 699.0,170.6 700.0,170.7 701.0,170.6 702.0,170.1 703.0,170.5 704.0,169.9 705.0,169.9 706.0,170.0 707.0,170.7 708.0,170.6 709.0,169.8 710.0,170.0 711.0,170.0 712.0,170.0 713.0,170.0 714.0,170.0 715.0,169.8 716.0,170.2 717.0,170.5 718.0,170.2 719.0,170.5 720.0,170.2 721.0,169.7 722.0,170.4 723.0,170.6 724.0,169.9 725.0,169.5 726.0,170.1 727.0,170.2 728.0,170.2 729.0,170.7 730.0,170.3 731.0,170.5 732.0,169.6 733.0,170.2 734.0,170.5 735.0,169.6 736.0,169.6 737.0,170.4 738.0,170.6 739.0,169.6 740.0,170.3 741.0,169.7 742.0,170.4 743.0,170.3 744.0,169.8 745.0,169.8 746.0,170.4 747.0,170.1 748.0,170.4 749.0,166.0 750.0,169.9 751.0,170.7 752.0,170.3 753.0,170.1 754.0,170.1 755.0,170.4 756.0,170.3 757.0,170.6 758.0,170.0 759.0,170.5 760.0,170.3 761.0,170.5 762.0,170.4 763.0,170.5 764.0,170.5 765.0,170.6 766.0,170.2 767.0,170.1 768.0,170.3 769.0,170.4 770.0,170.0 771.0,170.0 772.0,169.6 773.0,170.4 774.0,170.7 775.0,169.9 776.0,169.7 777.0,169.7 778.0,170.0 779.0,169.8 780.0,170.6 781.0,169.5 782.0,169.8 783.0,169.6 784.0,170.2 785.0,170.4 786.0,169.7 787.0,169.5 788.0,170.0 789.0,170.2 790.0,170.5 791.0,169.5 792.0,169.6 793.0,169.7 794.0,169.7 795.0,169.7 796.0,170.3 797.0,170.2 798.0,169.7 799.0,169.7 800.0,169.8 801.0,169.6 802.0,170.3 803.0,169.8 804.0,170.1 805.0,170.4 806.0,170.0 807.0,169.7 808.0,170.5 809.0,170.5 810.0,169.8 811.0,170.1 812.0,170.6 813.0,170.0 814.0,169.7 815.0,169.5 816.0,170.6 817.0,170.4 818.0,169.9 819.0,170.1 820.0,170.0 821.0,169.7 822.0,170.6 823.0,170.2 824.0,169.7 825.0,169.4 826.0,170.0 827.0,169.9 828.0,170.4 829.0,170.3 830.0,170.1 831.0,169.6 832.0,169.6 833.0,169.8 834.0,169.6 835.0,162.4 836.0,169.9 837.0,170.2 838.0,170.6" fill="none" stroke="#d4d400" stroke-width="1.0" stroke-linejoin="round"/>
<polyline points="25.0,394.5 26.0,391.3 27.0,390.8 28.0,394.7 29.0,391.4 30.0,391.2 31.0,393.3 32.0,392.1 33.0,394.3 34.0,391.6 35.0,394.5 36.0,392.0 37.0,393.1 38.0,394.4 39.0,393.4 40.0,394.4 41.0,393.5 42.0,390.9 43.0,394.2 44.0,393.1 45.0,391.9 46.0,391.5 47.0,394.1 48.0,393.0 49.0,394.5 50.0,393.8 51.0,394.5 52.0,393.0 53.0,393.5 54.0,393.1 55.0,391.7 56.0,394.5 57.0,391.9 58.0,393.8 59.0,394.5 60.0,393.3 61.0,391.3 62.0,394.0 63.0,393.4 64.0,391.4 65.0,390.9 66.0,392.8 67.0,390.8 68.0,394.4 69.0,392.7 70.0,392.8 71.0,392.3 72.0,393.3 73.0,394.4 74.0,391.9 75.0,392.2 76.0,393.0 77.0,391.9 78.0,393.1 79.0,392.9 80.0,392.4 81.0,393.4 82.0,392.8 83.0,391.1 84.0,394.7 85.0,392.1 86.0,392.4 87.0,392.3 88.0,394.4 89.0,394.5 90.0,392.7 91.0,392.3 92.0,391.1 93.0,394.3 94.0,391.4 95.0,392.9 96.0,392.1 97.0,392.0 98.0,392.1 99.0,391.5 100.0,390.8 101.0,392.8 102.0,393.9 103.0,393.3 104.0,391.5 105.0,393.5 106.0,390.9 107.0,392.3 108.0,394.0 109.0,394.4 110.0,392.5 111.0,394.1 112.0,392.7 113.0,392.8 114.0,393.0 115.0,394.7 116.0,393.7 117.0,392.6 118.0,393.6 119.0,393.3 120.0,392.1 121.0,393.8 122.0,394.0 123.0,393.1 124.0,394.5 125.0,390.8 126.0,392.7 127.0,393.2 128.0,392.1 129.0,391.4 130.0,393.5 131.0,392.4 132.0,391.8 133.0,390.9 134.0,394.6 135.0,392.1 136.0,391.2 137.0,391.6 138.0,391.7 139.0,394.2 140.0,391.4 141.0,391.8 142.0,391.1 143.0,392.6 144.0,391.5 145.0,392.1 146.0,393.6 147.0,394.4 148.0,394.0 149.0,390.9 150.0,392.2 151.0,394.1 152.0,390.8 153.0,391.5 154.0,392.7 155.0,392.2 156.0,393.7 157.0,393.6 158.0,392.6 159.0,391.7 160.0,391.6 161.0,391.8 162.0,391.0 163.0,393.4 164.0,391.3 165.0,394.3 166.0,393.3 167.0,390.9 168.0,392.7 169.0,393.1 170.0,390.9 171.0,392.6 172.0,390.8 173.0,393.2 174.0,389.7 175.0,391.7 176.0,392.5 177.0,391.5 178.0,388.5 179.0,389.2 180.0,387.1 181.0,387.4 182.0,388.9 183.0,388.2 184.0,384.5 185.0,385.4 186.0,385.9 187.0,383.6 188.0,385.5 189.0,385.4 190.0,383.5 191.0,382.2 192.0,383.6 193.0,381.8 194.0,379.9 195.0,379.8 196.0,378.8 197.0,381.0 198.0,379.1 199.0,379.4 200.0,379.3 201.0,379.4 202.0,375.8 203.0,376.1 204.0,377.4 205.0,376.5 206.0,374.5 207.0,375.0 208.0,372.6 209.0,372.0 210.0,371.0 211.0,371.8 212.0,370.7 213.0,371.3 214.0,372.6 215.0,368.8 216.0,369.9 217.0,370.6 218.0,369.0 219.0,368.2 220.0,368.6 221.0,365.1 222.0,368.3 223.0,366.8 224.0,366.7 225.0,366.3 226.0,362.8 227.0,362.2 228.0,362.1 229.0,362.9 230.0,364.1 231.0,363.5 232.0,360.9 233.0,361.3 234.0,361.2 235.0,359.1 236.0,361.1 237.0,360.4 238.0,359.1 239.0,359.2 240.0,358.3 241.0,357.2 242.0,355.3 243.0,354.7 244.0,354.0 245.0,352.7 246.0,355.7 247.0,352.6 248.0,351.0 249.0,351.7 250.0,350.3 251.0,351.1 252.0,350.2 253.0,349.0 254.0,349.7 255.0,348.9 256.0,348.2 257.0,349.5 258.0,346.9 259.0,347.3 260.0,348.2 261.0,348.0 262.0,345.1 263.0,343.2 264.0,346.3 265.0,344.1 266.0,342.4 267.0,341.5 268.0,341.4 269.0,341.2 270.0,340.0 271.0,339.1 272.0,342.3 273.0,341.1 274.0,337.8 275.0,338.7 276.0,339.5 277.0,337.8 278.0,335.5 279.0,336.1 280.0,335.7 281.0,337.3 282.0,335.5 283.0,334.4 284.0,334.6 285.0,331.8 286.0,333.8 287.0,333.7 288.0,332.7 289.0,330.9 290.0,330.1 291.0,328.5 292.0,328.2 293.0,328.0 294.0,328.7 295.0,329.4 296.0,326.7 297.0,327.2 298.0,327.3 299.0,326.7 300.0,323.8 301.0,326.9 302.0,325.0 303.0,323.3 304.0,322.6 305.0,323.8 306.0,324.3 307.0,321.4 308.0,321.1 309.0,321.2 310.0,319.2 311.0,319.6 312.0,321.1 313.0,319.1 314.0,319.7 315.0,316.9 316.0,318.8 317.0,317.9 318.0,315.2 319.0,315.9 320.0,316.0 321.0,315.0 322.0,314.6 323.0,312.6 324.0,313.4 325.0,312.0 326.0,313.3 327.0,311.1 328.0,313.0 329.0,310.8 330.0,308.9 331.0,309.1 332.0,307.5 333.0,309.4 334.0,306.1 335.0,307.8 336.0,306.1 337.0,307.4 338.0,304.3 339.0,306.0 340.0,305.6 341.0,303.2 342.0,302.2 343.0,302.7 344.0,303.3 345.0,301.2 346.0,299.7 347.0,300.9 347.6,301.0 348.3,340.0 348.8,385.0 349.5,391.0 350.0,391.8 351.0,390.4 352.0,394.8 353.0,393.0 354.0,391.6 355.0,391.4 356.0,392.5 357.0,392.9 358.0,391.7 359.0,391.3 360.0,393.0 361.0,392.0 362.0,392.8 363.0,392.8 364.0,393.8 365.0,393.3 366.0,391.9 367.0,391.7 368.0,394.4 369.0,391.2 370.0,391.5 371.0,391.3 372.0,394.3 373.0,393.2 374.0,394.7 375.0,393.5 376.0,392.3 377.0,392.7 378.0,393.9 379.0,391.9 380.0,394.2 381.0,392.6 382.0,391.2 383.0,392.4 384.0,393.2 385.0,391.6 386.0,394.6 387.0,394.7 388.0,393.0 389.0,394.6 390.0,393.8 391.0,393.2 392.0,391.6 393.0,394.8 394.0,394.7 395.0,392.8 396.0,392.5 397.0,391.3 398.0,393.5 399.0,394.4 400.0,392.6 401.0,392.2 402.0,393.5 403.0,394.2 404.0,391.7 405.0,392.1 406.0,393.6 407.0,391.2 408.0,394.3 409.0,392.3 410.0,394.3 411.0,392.8 412.0,391.7 413.0,391.1 414.0,391.5 415.0,392.0 416.0,394.0 417.0,394.2 418.0,393.5 419.0,392.2 420.0,393.7 421.0,393.9 422.0,392.5 423.0,391.3 424.0,392.9 425.0,391.9 426.0,391.8 427.0,392.6 428.0,391.3 429.0,394.6 430.0,392.1 431.0,394.6 432.0,393.9 433.0,391.0 434.0,394.6 435.0,394.2 436.0,393.1 437.0,394.5 438.0,392.9 439.0,391.1 440.0,391.6 441.0,392.2 442.0,394.4 443.0,394.3 444.0,391.5 445.0,392.4 446.0,391.4 447.0,391.9 448.0,392.4 449.0,392.7 450.0,391.6 451.0,393.6 452.0,392.0 453.0,394.6 454.0,392.9 455.0,392.7 456.0,394.1 457.0,392.4 458.0,392.0 459.0,391.5 460.0,392.2 461.0,391.9 462.0,393.9 463.0,392.4 464.0,393.8 465.0,392.1 466.0,391.3 467.0,392.2 468.0,392.6 469.0,394.6 470.0,391.8 471.0,391.8 472.0,391.6 473.0,392.0 474.0,394.8 475.0,394.7 476.0,391.9 477.0,391.2 478.0,392.9 479.0,393.3 480.0,391.4 481.0,392.7 482.0,394.1 483.0,391.0 484.0,393.9 485.0,393.7 486.0,394.1 487.0,392.9 488.0,392.9 489.0,393.1 490.0,391.5 491.0,393.1 492.0,392.0 493.0,392.3 494.0,391.2 495.0,391.6 496.0,391.2 497.0,393.2 498.0,391.9 499.0,393.2 500.0,393.0 501.0,391.9 502.0,391.5 503.0,393.4 504.0,393.7 505.0,393.8 506.0,393.0 507.0,393.3 508.0,391.1 509.0,392.2 510.0,394.2 511.0,392.5 512.0,391.4 513.0,392.7 514.0,394.3 515.0,391.4 516.0,391.4 517.0,393.0 518.0,394.5 519.0,392.6 520.0,392.0 521.0,394.1 522.0,391.4 523.0,392.2 524.0,393.4 525.0,394.4 526.0,394.4 527.0,392.3 528.0,392.1 529.0,392.5 530.0,391.5 531.0,392.1 532.0,394.1 533.0,394.9 534.0,392.1 535.0,391.3 536.0,394.0 537.0,394.9 538.0,394.2 539.0,392.7 540.0,394.0 541.0,394.0 542.0,394.0 543.0,393.0 544.0,395.0 545.0,394.1 546.0,391.9 547.0,392.7 548.0,391.4 549.0,392.5 550.0,394.3 551.0,392.9 552.0,393.1 553.0,394.1 554.0,391.3 555.0,392.4 556.0,392.9 557.0,393.0 558.0,393.7 559.0,394.7 560.0,394.2 561.0,393.2 562.0,393.7 563.0,393.2 564.0,394.9 565.0,393.4 566.0,393.4 567.0,392.6 568.0,392.7 569.0,394.1 570.0,392.5 571.0,394.6 572.0,393.9 573.0,394.8 574.0,393.8 575.0,393.3 576.0,392.5 577.0,391.1 578.0,393.6 579.0,394.0 580.0,393.9 581.0,394.0 582.0,391.1 583.0,393.7 584.0,392.1 585.0,392.6 586.0,394.5 587.0,392.6 588.0,392.9 589.0,391.2 590.0,391.7 591.0,391.8 592.0,391.9 593.0,393.1 594.0,391.2 595.0,391.4 596.0,391.3 597.0,393.9 598.0,394.9 599.0,394.0 600.0,393.1 601.0,391.5 602.0,394.1 603.0,391.5 604.0,391.3 605.0,393.0 606.0,394.4 607.0,392.2 608.0,394.5 609.0,392.3 610.0,394.9 611.0,394.0 612.0,394.5 613.0,394.9 614.0,394.3 615.0,391.8 616.0,393.1 617.0,393.2 618.0,393.9 619.0,391.9 620.0,393.3 621.0,392.1 622.0,391.7 623.0,392.8 624.0,394.2 625.0,393.2 626.0,392.4 627.0,391.9 628.0,392.4 629.0,392.6 630.0,392.1 631.0,392.2 632.0,391.9 633.0,392.2 634.0,393.7 635.0,393.5 636.0,393.5 637.0,394.7 638.0,393.7 639.0,391.5 640.0,392.6 641.0,393.1 642.0,394.0 643.0,393.1 644.0,391.4 645.0,392.9 646.0,393.6 647.0,394.1 648.0,392.8 649.0,391.9 650.0,391.1 651.0,393.0 652.0,394.0 653.0,391.4 654.0,393.1 655.0,393.4 656.0,393.2 657.0,391.9 658.0,391.4 659.0,391.1 660.0,392.2 661.0,394.6 662.0,392.7 663.0,394.9 664.0,394.3 665.0,393.3 666.0,392.8 667.0,393.2 668.0,394.4 669.0,392.3 670.0,391.6 671.0,394.6 672.0,393.5 673.0,392.5 674.0,392.6 675.0,391.4 676.0,393.3 677.0,394.1 678.0,393.0 679.0,393.8 680.0,394.0 681.0,392.3 682.0,393.6 683.0,394.9 684.0,393.9 685.0,391.7 686.0,393.7 687.0,393.6 688.0,394.1 689.0,393.8 690.0,394.7 691.0,394.9 692.0,391.8 693.0,392.9 694.0,391.2 695.0,394.9 696.0,391.4 697.0,392.7 698.0,393.5 699.0,392.7 700.0,391.7 701.0,393.0 702.0,391.9 703.0,393.0 704.0,393.9 705.0,392.2 706.0,392.8 707.0,393.5 708.0,393.1 709.0,394.2 710.0,394.6 711.0,394.9 712.0,391.7 713.0,392.9 714.0,391.5 715.0,393.8 716.0,392.6 717.0,394.4 718.0,392.9 719.0,394.2 720.0,391.1 721.0,393.5 722.0,392.7 723.0,394.3 724.0,391.4 725.0,391.4 726.0,393.8 727.0,392.3 728.0,392.7 729.0,392.6 730.0,394.9 731.0,393.5 732.0,394.3 733.0,394.4 734.0,394.4 735.0,392.8 736.0,392.2 737.0,393.1 738.0,394.6 739.0,394.5 740.0,392.9 741.0,394.6 742.0,394.0 743.0,391.2 744.0,393.5 745.0,394.2 746.0,391.2 747.0,392.5 748.0,393.6 749.0,393.0 750.0,393.1 751.0,391.4 752.0,392.0 753.0,394.5 754.0,392.4 755.0,392.9 756.0,393.4 757.0,392.1 758.0,392.7 759.0,393.0 760.0,394.5 761.0,394.4 762.0,391.7 763.0,393.0 764.0,394.0 765.0,394.6 766.0,393.1 767.0,393.5 768.0,393.6 769.0,393.7 770.0,394.6 771.0,394.9 772.0,395.0 773.0,391.5 774.0,393.9 775.0,392.6 776.0,392.1 777.0,391.4 778.0,394.6 779.0,394.6 780.0,393.1 781.0,393.0 782.0,391.8 783.0,394.7 784.0,394.0 785.0,391.7 786.0,393.3 787.0,395.0 788.0,392.1 789.0,392.5 790.0,392.5 791.0,392.5 792.0,391.5 793.0,393.5 794.0,392.0 795.0,393.7 796.0,392.9 797.0,394.4 798.0,394.0 799.0,394.4 800.0,391.6 801.0,394.2 802.0,394.1 803.0,392.2 804.0,391.0 805.0,391.4 806.0,394.1 807.0,394.9 808.0,391.3 809.0,392.0 810.0,392.6 811.0,391.3 812.0,393.6 813.0,394.4 814.0,394.4 815.0,391.7 816.0,394.6 817.0,394.1 818.0,391.6 819.0,394.4 820.0,394.7 821.0,394.5 822.0,394.0 823.0,394.3 824.0,393.1 825.0,391.0 826.0,393.7 827.0,393.0 828.0,391.6 829.0,391.5 830.0,394.5 831.0,394.6 832.0,391.2 833.0,391.1 834.0,393.8 835.0,392.2 836.0,394.5 837.0,392.8 838.0,393.8" fill="none" stroke="#08dcdc" stroke-width="1.05" stroke-linejoin="round"/>
<polyline points="25.0,444.3 26.0,444.5 27.0,445.2 28.0,443.2 29.0,444.6 30.0,445.5 31.0,445.6 32.0,442.8 33.0,444.6 34.0,444.4 35.0,444.0 36.0,445.8 37.0,444.1 38.0,443.8 39.0,445.7 40.0,442.5 41.0,443.2 42.0,443.3 43.0,444.0 44.0,442.3 45.0,444.4 46.0,444.9 47.0,443.7 48.0,445.3 49.0,445.6 50.0,444.2 51.0,444.7 52.0,442.5 53.0,442.3 54.0,445.8 55.0,443.2 56.0,442.9 57.0,445.5 58.0,444.9 59.0,442.6 60.0,443.3 61.0,443.0 62.0,441.1 63.0,442.1 64.0,444.1 65.0,443.3 66.0,443.6 67.0,442.8 68.0,442.5 69.0,442.2 70.0,445.4 71.0,444.9 72.0,444.2 73.0,442.6 74.0,442.7 75.0,442.6 76.0,443.3 77.0,442.3 78.0,443.1 79.0,442.9 80.0,442.8 81.0,444.6 82.0,443.8 83.0,443.9 84.0,443.5 85.0,444.1 86.0,445.1 87.0,443.3 88.0,442.4 89.0,443.9 90.0,443.5 91.0,445.1 92.0,442.5 93.0,445.4 94.0,442.2 95.0,444.2 96.0,443.8 97.0,443.3 98.0,445.5 99.0,444.8 100.0,442.7 101.0,444.0 102.0,444.4 103.0,442.2 104.0,442.4 105.0,444.4 106.0,444.9 107.0,443.9 108.0,443.7 109.0,444.0 110.0,443.1 111.0,445.4 112.0,445.8 113.0,443.9 114.0,442.2 115.0,443.6 116.0,445.2 117.0,443.3 118.0,442.5 119.0,442.8 120.0,444.8 121.0,444.5 122.0,443.2 123.0,444.4 124.0,443.0 125.0,445.8 126.0,445.3 127.0,443.7 128.0,445.2 129.0,445.6 130.0,445.4 131.0,445.0 132.0,444.3 133.0,444.0 134.0,445.3 135.0,444.5 136.0,444.8 137.0,443.0 138.0,442.5 139.0,443.1 140.0,444.3 141.0,444.3 142.0,442.9 143.0,442.8 144.0,445.7 145.0,442.4 146.0,445.6 147.0,445.0 148.0,444.3 149.0,445.9 150.0,442.7 151.0,442.1 152.0,445.7 153.0,443.7 154.0,445.6 155.0,445.2 156.0,442.6 157.0,442.3 158.0,442.2 159.0,445.1 160.0,445.1 161.0,443.0 162.0,442.5 163.0,443.5 164.0,445.1 165.0,444.9 166.0,445.4 167.0,445.8 168.0,445.0 169.0,445.3 170.0,442.2 171.0,442.1 172.0,441.7 173.0,437.2 174.0,436.1 175.0,435.3 176.0,436.1 177.0,436.2 178.0,436.8 179.0,436.7 180.0,435.7 181.0,435.3 182.0,435.8 183.0,435.5 184.0,435.5 185.0,436.7 186.0,435.6 187.0,438.2 188.0,437.2 189.0,436.9 190.0,437.6 191.0,436.1 192.0,435.4 193.0,435.6 194.0,436.6 195.0,436.7 196.0,436.3 197.0,436.6 198.0,438.6 199.0,435.5 200.0,437.2 201.0,436.9 202.0,436.6 203.0,438.3 204.0,436.4 205.0,435.8 206.0,436.2 207.0,439.4 208.0,437.0 209.0,436.1 210.0,439.4 211.0,438.2 212.0,439.4 213.0,437.0 214.0,438.9 215.0,436.0 216.0,436.8 217.0,438.9 218.0,437.9 219.0,438.9 220.0,437.4 221.0,439.3 222.0,436.3 223.0,438.4 224.0,436.8 225.0,434.8 226.0,439.4 227.0,437.8 228.0,439.2 229.0,437.3 230.0,439.0 231.0,439.7 232.0,438.6 233.0,437.2 234.0,438.8 235.0,439.9 236.0,439.4 237.0,438.1 238.0,437.9 239.0,436.8 240.0,439.4 241.0,437.1 242.0,437.3 243.0,436.7 244.0,437.2 245.0,438.0 246.0,438.4 247.0,437.3 248.0,438.3 249.0,439.6 250.0,437.1 251.0,437.2 252.0,438.7 253.0,440.2 254.0,440.3 255.0,439.0 256.0,437.2 257.0,440.2 258.0,440.7 259.0,440.3 260.0,439.0 261.0,438.4 262.0,439.2 263.0,440.0 264.0,440.8 265.0,438.9 266.0,439.0 267.0,438.3 268.0,439.2 269.0,439.2 270.0,438.3 271.0,438.9 272.0,438.7 273.0,438.1 274.0,438.3 275.0,438.5 276.0,440.6 277.0,438.5 278.0,440.5 279.0,440.9 280.0,440.8 281.0,440.5 282.0,438.2 283.0,439.2 284.0,440.7 285.0,438.5 286.0,439.9 287.0,440.9 288.0,441.2 289.0,439.0 290.0,438.1 291.0,437.8 292.0,438.9 293.0,439.8 294.0,438.9 295.0,440.9 296.0,440.3 297.0,440.2 298.0,441.0 299.0,439.1 300.0,438.4 301.0,439.3 302.0,439.1 303.0,438.4 304.0,441.0 305.0,441.5 306.0,438.2 307.0,440.8 308.0,438.4 309.0,439.7 310.0,439.4 311.0,441.6 312.0,439.9 313.0,440.2 314.0,439.6 315.0,439.3 316.0,439.3 317.0,438.6 318.0,438.4 319.0,440.5 320.0,441.2 321.0,441.0 322.0,439.5 323.0,442.3 324.0,438.8 325.0,440.2 326.0,439.8 327.0,439.3 328.0,442.3 329.0,441.4 330.0,439.2 331.0,439.4 332.0,441.8 333.0,440.2 334.0,439.9 335.0,439.9 336.0,440.1 337.0,441.1 338.0,440.1 339.0,441.1 340.0,439.2 341.0,441.0 342.0,441.2 343.0,440.2 344.0,442.3 345.0,442.6 346.0,441.6 347.0,440.7 347.8,441.0 347.8,520.0 348.4,490.0 348.8,470.0 349.0,463.4 349.0,462.1 350.0,463.6 351.0,462.0 352.0,461.2 353.0,462.3 354.0,460.8 355.0,462.2 356.0,462.3 357.0,459.2 358.0,461.3 359.0,459.3 360.0,459.6 361.0,460.7 362.0,461.4 363.0,458.6 364.0,460.0 365.0,458.7 366.0,461.2 367.0,458.6 368.0,460.7 369.0,458.8 370.0,460.9 371.0,461.8 372.0,462.8 373.0,462.5 374.0,461.9 375.0,461.6 376.0,462.8 377.0,463.1 378.0,463.3 379.0,463.9 380.0,464.3 381.0,465.3 382.0,464.4 383.0,465.7 384.0,465.4 385.0,464.2 386.0,466.0 387.0,464.5 388.0,466.5 389.0,466.8 390.0,467.1 391.0,467.3 392.0,466.7 393.0,466.1 394.0,465.5 395.0,467.0 396.0,468.1 397.0,466.3 398.0,465.9 399.0,469.1 400.0,470.8 401.0,469.3 402.0,470.1 403.0,465.5 404.0,462.7 405.0,459.3 406.0,452.8 407.0,450.5 408.0,443.4 409.0,443.1 410.0,446.7 411.0,449.8 412.0,451.3 413.0,454.6 414.0,456.0 415.0,453.8 416.0,452.1 417.0,447.9 418.0,446.5 419.0,446.5 420.0,448.9 421.0,448.4 422.0,449.8 423.0,453.9 424.0,452.6 425.0,451.7 426.0,453.1 427.0,452.8 428.0,453.2 429.0,452.2 430.0,452.4 431.0,450.4 432.0,451.7 433.0,451.5 434.0,451.0 435.0,451.4 436.0,453.4 437.0,450.9 438.0,450.5 439.0,451.3 440.0,450.7 441.0,450.1 442.0,453.5 443.0,452.1 444.0,450.1 445.0,452.0 446.0,450.7 447.0,451.8 448.0,453.6 449.0,453.7 450.0,451.5 451.0,452.9 452.0,451.8 453.0,450.3 454.0,451.5 455.0,453.0 456.0,452.9 457.0,452.7 458.0,453.7 459.0,451.4 460.0,452.6 461.0,453.0 462.0,453.4 463.0,453.2 464.0,453.2 465.0,451.2 466.0,451.3 467.0,452.2 468.0,450.3 469.0,451.0 470.0,451.3 471.0,450.7 472.0,450.6 473.0,452.3 474.0,451.0 475.0,450.1 476.0,452.9 477.0,453.4 478.0,450.7 479.0,452.4 480.0,450.1 481.0,450.7 482.0,450.4 483.0,452.2 484.0,451.9 485.0,452.9 486.0,452.3 487.0,452.7 488.0,453.1 489.0,452.0 490.0,450.6 491.0,450.4 492.0,453.0 493.0,452.9 494.0,452.2 495.0,453.4 496.0,452.8 497.0,451.3 498.0,450.4 499.0,451.4 500.0,453.2 501.0,453.1 502.0,449.7 503.0,449.7 504.0,451.4 505.0,453.2 506.0,453.0 507.0,452.9 508.0,450.0 509.0,450.5 510.0,452.6 511.0,451.3 512.0,450.9 513.0,453.3 514.0,449.7 515.0,451.5 516.0,453.0 517.0,452.3 518.0,453.0 519.0,450.7 520.0,451.8 521.0,453.3 522.0,450.1 523.0,451.3 524.0,453.4 525.0,450.2 526.0,452.5 527.0,452.4 528.0,450.6 529.0,453.4 530.0,452.6 531.0,450.1 532.0,453.3 533.0,452.9 534.0,451.4 535.0,449.7 536.0,452.5 537.0,451.8 538.0,452.4 539.0,449.8 540.0,451.4 541.0,452.6 542.0,452.3 543.0,450.2 544.0,450.8 545.0,451.2 546.0,451.3 547.0,453.3 548.0,453.0 549.0,449.5 550.0,451.8 551.0,450.0 552.0,452.8 553.0,451.5 554.0,452.9 555.0,452.9 556.0,453.0 557.0,450.1 558.0,449.7 559.0,452.4 560.0,451.2 561.0,452.4 562.0,451.1 563.0,451.0 564.0,452.2 565.0,450.8 566.0,451.3 567.0,450.9 568.0,452.0 569.0,449.7 570.0,451.1 571.0,451.6 572.0,452.0 573.0,452.8 574.0,450.8 575.0,453.0 576.0,452.0 577.0,450.8 578.0,451.5 579.0,450.7 580.0,451.8 581.0,449.4 582.0,452.7 583.0,450.7 584.0,449.4 585.0,449.6 586.0,450.6 587.0,450.3 588.0,452.5 589.0,450.7 590.0,452.8 591.0,450.3 592.0,450.6 593.0,452.9 594.0,452.5 595.0,452.8 596.0,449.7 597.0,449.5 598.0,451.9 599.0,450.5 600.0,449.6 601.0,449.6 602.0,450.5 603.0,450.4 604.0,451.8 605.0,453.0 606.0,449.9 607.0,452.2 608.0,451.5 609.0,452.5 610.0,453.0 611.0,452.7 612.0,449.7 613.0,452.0 614.0,452.1 615.0,450.6 616.0,449.3 617.0,452.1 618.0,451.5 619.0,452.0 620.0,452.0 621.0,451.9 622.0,449.3 623.0,452.7 624.0,452.8 625.0,450.5 626.0,452.1 627.0,452.7 628.0,450.8 629.0,450.4 630.0,451.4 631.0,452.1 632.0,450.7 633.0,451.7 634.0,452.7 635.0,450.5 636.0,452.5 637.0,449.6 638.0,451.3 639.0,452.2 640.0,450.6 641.0,450.1 642.0,450.1 643.0,450.4 644.0,450.5 645.0,450.6 646.0,450.0 647.0,451.3 648.0,449.9 649.0,450.0 650.0,450.8 651.0,452.5 652.0,450.0 653.0,449.7 654.0,451.9 655.0,451.2 656.0,449.4 657.0,452.7 658.0,449.7 659.0,451.4 660.0,449.9 661.0,452.1 662.0,450.4 663.0,451.3 664.0,452.0 665.0,451.6 666.0,450.1 667.0,450.1 668.0,451.1 669.0,450.9 670.0,451.6 671.0,449.2 672.0,449.1 673.0,448.9 674.0,451.9 675.0,449.5 676.0,451.7 677.0,450.6 678.0,452.5 679.0,451.3 680.0,452.1 681.0,449.2 682.0,452.2 683.0,450.3 684.0,449.0 685.0,452.1 686.0,449.7 687.0,451.3 688.0,448.9 689.0,450.5 690.0,450.6 691.0,450.5 692.0,451.9 693.0,449.9 694.0,452.3 695.0,449.4 696.0,452.5 697.0,449.9 698.0,451.4 699.0,452.3 700.0,451.4 701.0,452.0 702.0,449.1 703.0,452.4 704.0,448.9 705.0,451.3 706.0,451.9 707.0,451.6 708.0,451.5 709.0,451.0 710.0,452.5 711.0,449.6 712.0,452.2 713.0,451.8 714.0,449.4 715.0,450.5 716.0,450.3 717.0,449.2 718.0,451.9 719.0,451.9 720.0,451.5 721.0,448.8 722.0,451.4 723.0,452.2 724.0,451.4 725.0,452.2 726.0,452.3 727.0,451.3 728.0,451.5 729.0,449.8 730.0,451.6 731.0,449.8 732.0,449.6 733.0,449.9 734.0,449.8 735.0,448.7 736.0,449.2 737.0,449.6 738.0,449.4 739.0,448.7 740.0,451.4 741.0,451.7 742.0,449.8 743.0,451.3 744.0,451.9 745.0,448.7 746.0,450.7 747.0,450.8 748.0,449.2 749.0,452.0 750.0,451.6 751.0,450.6 752.0,450.6 753.0,451.7 754.0,448.7 755.0,451.8 756.0,450.5 757.0,449.6 758.0,449.5 759.0,450.5 760.0,448.9 761.0,451.6 762.0,450.0 763.0,451.9 764.0,452.1 765.0,451.5 766.0,448.9 767.0,449.4 768.0,450.8 769.0,452.0 770.0,450.8 771.0,449.8 772.0,451.5 773.0,450.2 774.0,450.6 775.0,450.1 776.0,452.0 777.0,450.7 778.0,448.8 779.0,450.8 780.0,449.9 781.0,449.0 782.0,450.3 783.0,449.4 784.0,452.0 785.0,449.2 786.0,450.4 787.0,448.4 788.0,449.5 789.0,450.8 790.0,450.2 791.0,450.8 792.0,450.5 793.0,450.7 794.0,449.3 795.0,451.8 796.0,450.8 797.0,448.4 798.0,451.5 799.0,448.9 800.0,449.9 801.0,450.7 802.0,451.7 803.0,448.9 804.0,449.4 805.0,450.2 806.0,450.8 807.0,450.0 808.0,450.9 809.0,452.0 810.0,448.5 811.0,449.8 812.0,451.2 813.0,451.3 814.0,451.8 815.0,449.5 816.0,449.2 817.0,450.7 818.0,451.3 819.0,451.2 820.0,450.2 821.0,448.7 822.0,450.8 823.0,449.1 824.0,448.3 825.0,448.2 826.0,449.5 827.0,449.6 828.0,450.2 829.0,449.8 830.0,450.1 831.0,450.5 832.0,448.8 833.0,451.2 834.0,450.7 835.0,451.2 836.0,450.3 837.0,450.2 838.0,451.3" fill="none" stroke="#ee00ee" stroke-width="1.05" stroke-linejoin="round"/>
<polyline points="25.0,558.2 26.0,558.3 27.0,558.7 28.0,558.0 29.0,558.0 30.0,557.8 31.0,557.9 32.0,557.8 33.0,558.0 34.0,558.3 35.0,555.8 36.0,558.5 37.0,558.2 38.0,558.2 39.0,558.5 40.0,558.1 41.0,557.9 42.0,558.6 43.0,558.4 44.0,557.9 45.0,557.9 46.0,557.9 47.0,558.8 48.0,557.9 49.0,558.4 50.0,558.8 51.0,557.8 52.0,558.2 53.0,558.3 54.0,558.7 55.0,558.0 56.0,558.1 57.0,558.0 58.0,557.8 59.0,558.5 60.0,558.6 61.0,558.2 62.0,557.8 63.0,558.5 64.0,558.5 65.0,558.5 66.0,558.1 67.0,558.6 68.0,558.4 69.0,558.4 70.0,558.3 71.0,558.0 72.0,558.3 73.0,558.6 74.0,558.5 75.0,558.1 76.0,558.6 77.0,558.6 78.0,557.8 79.0,558.0 80.0,558.0 81.0,557.8 82.0,558.6 83.0,558.4 84.0,558.3 85.0,558.8 86.0,558.2 87.0,558.0 88.0,557.9 89.0,558.1 90.0,558.6 91.0,558.4 92.0,557.9 93.0,558.2 94.0,557.8 95.0,558.4 96.0,557.9 97.0,558.0 98.0,558.4 99.0,558.6 100.0,558.4 101.0,558.1 102.0,558.4 103.0,558.1 104.0,557.8 105.0,558.1 106.0,558.5 107.0,558.4 108.0,558.0 109.0,558.6 110.0,558.6 111.0,558.1 112.0,558.8 113.0,558.1 114.0,557.9 115.0,558.3 116.0,558.7 117.0,561.4 118.0,558.4 119.0,558.3 120.0,558.1 121.0,558.1 122.0,558.2 123.0,558.3 124.0,558.7 125.0,557.9 126.0,558.1 127.0,558.7 128.0,558.5 129.0,557.9 130.0,558.2 131.0,558.5 132.0,558.7 133.0,557.8 134.0,553.7 135.0,558.5 136.0,558.1 137.0,558.3 138.0,558.6 139.0,558.0 140.0,558.5 141.0,558.4 142.0,557.9 143.0,558.1 144.0,558.2 145.0,557.9 146.0,558.8 147.0,562.1 148.0,558.1 149.0,558.4 150.0,558.3 151.0,558.1 152.0,558.1 153.0,558.3 154.0,558.7 155.0,557.9 156.0,558.7 157.0,558.7 158.0,558.5 159.0,558.6 160.0,558.2 161.0,558.8 162.0,558.5 163.0,558.5 164.0,558.2 165.0,558.0 166.0,560.3 167.0,562.8 168.0,557.8 169.0,558.1 170.0,558.3 171.0,558.0 172.0,557.8 173.0,557.8 174.0,557.6 175.0,557.6 176.0,557.8 177.0,557.9 178.0,558.0 179.0,557.6 180.0,557.3 181.0,558.1 182.0,557.7 183.0,557.7 184.0,557.7 185.0,557.2 186.0,557.4 187.0,557.1 188.0,557.4 189.0,557.5 190.0,556.6 191.0,557.3 192.0,556.6 193.0,556.4 194.0,556.4 195.0,556.9 196.0,557.1 197.0,557.1 198.0,556.3 199.0,556.5 200.0,556.9 201.0,556.8 202.0,556.7 203.0,556.1 204.0,556.0 205.0,555.9 206.0,555.9 207.0,556.0 208.0,556.3 209.0,556.1 210.0,555.6 211.0,555.5 212.0,555.7 213.0,556.1 214.0,555.6 215.0,555.9 216.0,555.7 217.0,555.9 218.0,555.4 219.0,555.2 220.0,555.3 221.0,555.6 222.0,555.0 223.0,554.8 224.0,555.4 225.0,555.0 226.0,555.1 227.0,554.6 228.0,554.4 229.0,554.5 230.0,554.6 231.0,554.2 232.0,554.4 233.0,555.0 234.0,554.4 235.0,553.9 236.0,554.7 237.0,554.1 238.0,553.9 239.0,554.3 240.0,554.3 241.0,553.9 242.0,554.2 243.0,554.3 244.0,553.7 245.0,553.8 246.0,553.3 247.0,553.8 248.0,553.4 249.0,553.7 250.0,553.8 251.0,553.3 252.0,553.6 253.0,553.8 254.0,552.9 255.0,553.5 256.0,553.1 257.0,553.5 258.0,552.6 259.0,552.9 260.0,552.6 261.0,552.6 262.0,553.2 263.0,552.8 264.0,552.5 265.0,553.1 266.0,552.1 267.0,552.0 268.0,552.7 269.0,552.4 270.0,552.7 271.0,552.3 272.0,552.6 273.0,552.0 274.0,551.8 275.0,552.4 276.0,552.0 277.0,551.4 278.0,551.3 279.0,551.3 280.0,551.9 281.0,551.8 282.0,551.2 283.0,551.8 284.0,551.8 285.0,551.6 286.0,551.4 287.0,551.2 288.0,551.4 289.0,551.1 290.0,551.5 291.0,549.6 292.0,547.7 293.0,551.4 294.0,551.4 295.0,550.9 296.0,550.4 297.0,550.7 298.0,551.1 299.0,550.3 300.0,550.3 301.0,550.2 302.0,550.1 303.0,550.7 304.0,550.3 305.0,549.8 306.0,550.2 307.0,550.3 308.0,549.6 309.0,549.7 310.0,549.4 311.0,550.1 312.0,549.7 313.0,549.3 314.0,549.4 315.0,549.3 316.0,549.7 317.0,554.4 318.0,549.4 319.0,549.2 320.0,548.9 321.0,549.1 322.0,549.3 323.0,549.2 324.0,549.2 325.0,548.7 326.0,548.5 327.0,549.2 328.0,549.1 329.0,548.9 330.0,549.2 331.0,548.5 332.0,548.8 333.0,548.3 334.0,548.6 335.0,548.8 336.0,548.3 337.0,548.4 338.0,548.7 339.0,548.2 340.0,547.9 341.0,548.5 342.0,548.2 343.0,547.8 344.0,552.7 345.0,547.4 346.0,547.4 347.0,548.2 347.8,547.7 347.8,598.0 348.5,570.0 349.5,558.0 350.0,558.1 351.0,558.3 352.0,557.7 353.0,558.3 354.0,558.2 355.0,558.4 356.0,558.0 357.0,558.4 358.0,558.1 359.0,557.6 360.0,558.4 361.0,557.8 362.0,558.4 363.0,558.0 364.0,557.9 365.0,558.0 366.0,557.9 367.0,557.6 368.0,557.5 369.0,557.6 370.0,558.4 371.0,557.8 372.0,557.5 373.0,557.9 374.0,558.1 375.0,558.1 376.0,558.4 377.0,562.4 378.0,563.0 379.0,557.5 380.0,557.6 381.0,558.0 382.0,558.1 383.0,557.9 384.0,558.3 385.0,556.0 386.0,554.5 387.0,557.9 388.0,558.1 389.0,557.7 390.0,557.7 391.0,558.1 392.0,557.9 393.0,558.5 394.0,558.4 395.0,557.8 396.0,561.0 397.0,561.2 398.0,557.9 399.0,557.9 400.0,557.9 401.0,557.6 402.0,557.8 403.0,557.9 404.0,558.2 405.0,557.6 406.0,558.1 407.0,557.9 408.0,558.3 409.0,558.2 410.0,557.7 411.0,558.2 412.0,557.8 413.0,558.3 414.0,557.5 415.0,557.8 416.0,558.0 417.0,557.8 418.0,563.9 419.0,558.1 420.0,557.7 421.0,558.3 422.0,557.8 423.0,558.2 424.0,558.4 425.0,557.6 426.0,558.3 427.0,557.6 428.0,557.9 429.0,557.6 430.0,558.4 431.0,557.8 432.0,558.0 433.0,558.4 434.0,557.6 435.0,557.5 436.0,558.2 437.0,557.5 438.0,557.6 439.0,557.7 440.0,557.5 441.0,557.8 442.0,557.5 443.0,558.4 444.0,558.0 445.0,557.5 446.0,558.2 447.0,557.7 448.0,558.3 449.0,557.5 450.0,557.6 451.0,557.8 452.0,558.3 453.0,558.4 454.0,558.4 455.0,557.7 456.0,557.8 457.0,558.3 458.0,558.3 459.0,558.4 460.0,557.5 461.0,557.5 462.0,557.9 463.0,558.3 464.0,558.1 465.0,557.9 466.0,558.1 467.0,557.9 468.0,558.3 469.0,557.7 470.0,558.2 471.0,557.6 472.0,558.0 473.0,557.8 474.0,557.8 475.0,557.7 476.0,557.5 477.0,557.5 478.0,558.1 479.0,558.1 480.0,558.1 481.0,557.9 482.0,558.0 483.0,558.2 484.0,558.4 485.0,557.8 486.0,558.2 487.0,558.3 488.0,558.3 489.0,558.1 490.0,557.7 491.0,558.3 492.0,558.0 493.0,558.2 494.0,558.2 495.0,557.6 496.0,557.5 497.0,558.2 498.0,558.1 499.0,557.5 500.0,557.5 501.0,557.9 502.0,558.1 503.0,557.6 504.0,558.1 505.0,557.8 506.0,558.1 507.0,557.7 508.0,557.7 509.0,557.5 510.0,552.1 511.0,558.0 512.0,557.5 513.0,557.5 514.0,558.3 515.0,557.7 516.0,558.4 517.0,558.4 518.0,558.2 519.0,557.6 520.0,557.5 521.0,558.3 522.0,557.8 523.0,557.5 524.0,557.5 525.0,557.7 526.0,557.7 527.0,557.5 528.0,558.1 529.0,557.5 530.0,557.7 531.0,558.1 532.0,558.2 533.0,558.2 534.0,557.7 535.0,557.6 536.0,558.0 537.0,558.2 538.0,558.2 539.0,558.2 540.0,557.8 541.0,558.1 542.0,562.4 543.0,562.1 544.0,557.6 545.0,558.2 546.0,557.5 547.0,557.4 548.0,557.7 549.0,557.8 550.0,558.4 551.0,558.2 552.0,557.9 553.0,558.0 554.0,557.8 555.0,558.3 556.0,558.0 557.0,557.8 558.0,558.4 559.0,558.2 560.0,557.8 561.0,558.4 562.0,557.5 563.0,558.3 564.0,557.9 565.0,557.9 566.0,558.3 567.0,557.8 568.0,557.8 569.0,557.6 570.0,558.1 571.0,558.1 572.0,558.1 573.0,557.6 574.0,558.3 575.0,557.9 576.0,557.5 577.0,557.6 578.0,557.5 579.0,557.5 580.0,557.9 581.0,558.2 582.0,558.1 583.0,558.4 584.0,558.4 585.0,558.0 586.0,558.3 587.0,558.3 588.0,557.9 589.0,558.2 590.0,558.0 591.0,558.2 592.0,558.2 593.0,558.3 594.0,557.9 595.0,557.5 596.0,557.5 597.0,558.1 598.0,558.0 599.0,558.2 600.0,557.6 601.0,558.2 602.0,558.4 603.0,557.9 604.0,557.5 605.0,558.1 606.0,557.5 607.0,558.2 608.0,558.2 609.0,557.8 610.0,558.3 611.0,557.8 612.0,556.2 613.0,557.7 614.0,558.1 615.0,557.5 616.0,557.7 617.0,557.8 618.0,558.3 619.0,558.2 620.0,557.5 621.0,557.8 622.0,558.2 623.0,558.4 624.0,557.8 625.0,557.5 626.0,558.2 627.0,557.6 628.0,558.0 629.0,557.7 630.0,557.5 631.0,557.4 632.0,557.8 633.0,557.4 634.0,558.0 635.0,558.1 636.0,558.1 637.0,557.9 638.0,558.0 639.0,558.2 640.0,557.7 641.0,558.0 642.0,557.5 643.0,558.1 644.0,558.4 645.0,557.7 646.0,558.1 647.0,557.5 648.0,558.4 649.0,557.4 650.0,557.6 651.0,557.8 652.0,558.1 653.0,557.9 654.0,557.5 655.0,558.0 656.0,557.4 657.0,557.7 658.0,558.3 659.0,557.9 660.0,557.4 661.0,557.6 662.0,557.6 663.0,557.5 664.0,558.1 665.0,557.6 666.0,558.0 667.0,557.9 668.0,558.2 669.0,557.7 670.0,557.4 671.0,558.0 672.0,557.9 673.0,557.4 674.0,557.8 675.0,557.5 676.0,558.4 677.0,557.9 678.0,558.2 679.0,558.0 680.0,558.0 681.0,558.2 682.0,557.4 683.0,557.7 684.0,553.0 685.0,557.6 686.0,558.3 687.0,557.7 688.0,558.1 689.0,557.9 690.0,557.9 691.0,558.2 692.0,558.3 693.0,558.3 694.0,557.7 695.0,557.9 696.0,557.5 697.0,558.1 698.0,558.0 699.0,557.8 700.0,557.9 701.0,557.7 702.0,557.6 703.0,557.8 704.0,558.0 705.0,557.4 706.0,557.6 707.0,557.6 708.0,558.1 709.0,557.8 710.0,558.2 711.0,557.7 712.0,557.5 713.0,557.6 714.0,557.4 715.0,557.8 716.0,557.8 717.0,557.8 718.0,558.0 719.0,557.9 720.0,557.7 721.0,558.0 722.0,557.5 723.0,558.0 724.0,557.7 725.0,558.1 726.0,558.2 727.0,557.8 728.0,557.4 729.0,558.0 730.0,557.4 731.0,557.4 732.0,557.5 733.0,558.1 734.0,557.7 735.0,558.0 736.0,557.8 737.0,557.9 738.0,557.4 739.0,558.3 740.0,557.8 741.0,557.4 742.0,557.9 743.0,558.2 744.0,557.8 745.0,556.0 746.0,557.4 747.0,557.5 748.0,557.7 749.0,557.4 750.0,558.0 751.0,557.3 752.0,557.8 753.0,558.0 754.0,557.5 755.0,558.3 756.0,557.9 757.0,558.1 758.0,558.1 759.0,557.9 760.0,557.7 761.0,557.9 762.0,558.0 763.0,557.7 764.0,557.3 765.0,558.3 766.0,557.6 767.0,558.3 768.0,558.3 769.0,557.4 770.0,558.2 771.0,557.7 772.0,558.2 773.0,558.1 774.0,557.6 775.0,558.1 776.0,557.4 777.0,558.2 778.0,557.9 779.0,558.3 780.0,557.8 781.0,558.0 782.0,557.6 783.0,557.6 784.0,557.4 785.0,558.0 786.0,558.3 787.0,557.7 788.0,557.4 789.0,557.4 790.0,555.5 791.0,558.0 792.0,557.6 793.0,557.8 794.0,558.2 795.0,558.0 796.0,557.4 797.0,558.2 798.0,558.0 799.0,557.5 800.0,557.4 801.0,558.2 802.0,557.6 803.0,557.8 804.0,557.6 805.0,558.1 806.0,557.7 807.0,558.0 808.0,558.2 809.0,557.4 810.0,557.7 811.0,558.0 812.0,558.1 813.0,558.2 814.0,557.7 815.0,558.0 816.0,557.9 817.0,558.2 818.0,557.5 819.0,557.4 820.0,557.5 821.0,557.6 822.0,558.0 823.0,557.9 824.0,557.6 825.0,557.4 826.0,557.7 827.0,558.3 828.0,557.4 829.0,558.2 830.0,557.7 831.0,557.9 832.0,557.7 833.0,558.2 834.0,558.1 835.0,558.0 836.0,557.8 837.0,557.9 838.0,557.5" fill="none" stroke="#10d010" stroke-width="1.0" stroke-linejoin="round"/>
<path d="M347.8 518 V575" stroke="#c000c0" stroke-width="1" opacity="0.6"/>
<path d="M9 334.25 h10 l4 4.25 l-4 4.25 h-10 Z" fill="#ffff00"/>
<text x="15.8" y="342.4" font-size="10" fill="#000" font-weight="bold" text-anchor="middle" >1</text>
<path d="M9 392.45 h10 l4 4.25 l-4 4.25 h-10 Z" fill="#00e8f0"/>
<text x="15.8" y="400.59999999999997" font-size="10" fill="#000" font-weight="bold" text-anchor="middle" >2</text>
<path d="M9 441.75 h10 l4 4.25 l-4 4.25 h-10 Z" fill="#ff00ff"/>
<text x="15.8" y="449.9" font-size="10" fill="#000" font-weight="bold" text-anchor="middle" >3</text>
<path d="M9 555.75 h10 l4 4.25 l-4 4.25 h-10 Z" fill="#00ff00"/>
<text x="15.8" y="563.9" font-size="10" fill="#000" font-weight="bold" text-anchor="middle" >4</text>
<path d="M841 496 L845 491.8 h9.5 v8.5 h-9.5 Z" fill="#ff00ff"/>
<path d="M847 494.3 h5 M849.5 494.3 v5" stroke="#400060" stroke-width="1"/>
<rect x="24" y="639" width="72" height="15" fill="#000" />
<text x="25.6" y="650.2" font-size="9.4" fill="#e0e000" textLength="18.6" lengthAdjust="spacingAndGlyphs" >CH1</text>
<path d="M47 645.8 h9" stroke="#e0e000" stroke-width="1" stroke-dasharray="1.3 1.2" opacity="0.7"/>
<rect x="47.8" y="648.2" width="8" height="1.6" fill="#e0e000" opacity="0.7"/>
<text x="62.4" y="650.2" font-size="9.4" fill="#e0e000" textLength="24" lengthAdjust="spacingAndGlyphs" >2.00V</text>
<rect x="110.3" y="639" width="72" height="15" fill="#000" />
<text x="111.89999999999999" y="650.2" font-size="9.4" fill="#00c8d0" textLength="19.6" lengthAdjust="spacingAndGlyphs" >CH2</text>
<path d="M133.3 645.8 h9" stroke="#00c8d0" stroke-width="1" stroke-dasharray="1.3 1.2" opacity="0.7"/>
<rect x="134.1" y="648.2" width="8" height="1.6" fill="#00c8d0" opacity="0.7"/>
<text x="148.6" y="650.2" font-size="9.4" fill="#00c8d0" textLength="24.4" lengthAdjust="spacingAndGlyphs" >5.00A</text>
<rect x="196" y="639" width="72" height="15" fill="#000" />
<rect x="196.8" y="640" width="21.2" height="13" fill="#ff00ff" />
<text x="197.5" y="650.2" font-size="9.4" fill="#3c0068" textLength="19.5" lengthAdjust="spacingAndGlyphs" >CH3</text>
<path d="M219 645.8 h9" stroke="#e000e0" stroke-width="1" stroke-dasharray="1.3 1.2" opacity="0.7"/>
<rect x="219.8" y="648.2" width="8" height="1.6" fill="#e000e0" opacity="0.7"/>
<text x="232.4" y="650.2" font-size="9.4" fill="#e000e0" textLength="29" lengthAdjust="spacingAndGlyphs" >5.00kV</text>
<rect x="282" y="639" width="72" height="15" fill="#000" />
<text x="283.6" y="650.2" font-size="9.4" fill="#00d000" textLength="18.9" lengthAdjust="spacingAndGlyphs" >CH4</text>
<path d="M305 645.8 h9" stroke="#00d000" stroke-width="1" stroke-dasharray="1.3 1.2" opacity="0.7"/>
<rect x="305.8" y="648.2" width="8" height="1.6" fill="#00d000" opacity="0.7"/>
<text x="320.3" y="650.2" font-size="9.4" fill="#00d000" textLength="24.3" lengthAdjust="spacingAndGlyphs" >2.00V</text>
<rect x="857" y="73" width="143" height="584" fill="#f0f0f0" />
<path d="M861.5 83.5 V169.5 H991.5 V83.5 H908 M866 83.5 H861.5" fill="none" stroke="#dcdcdc" stroke-width="1"/>
<text x="868" y="86.15" font-size="8.5" fill="#000" textLength="38" lengthAdjust="spacingAndGlyphs" >Horizontal</text>
<text x="863.5" y="102.65" font-size="8.5" fill="#000" textLength="37" lengthAdjust="spacingAndGlyphs" >Time / DIV</text>
<rect x="863.5" y="109.5" width="53" height="16" fill="#e5e5e5" stroke="#adadad" stroke-width="1"/>
<text x="866.2" y="120.25" font-size="8.5" fill="#000" textLength="31.7" lengthAdjust="spacingAndGlyphs" >2.000ms</text>
<path d="M906.5 116.0 l3 3 l3 -3" fill="none" stroke="#444" stroke-width="0.9"/>
<text x="863.5" y="139.45" font-size="8.5" fill="#000" textLength="25.6" lengthAdjust="spacingAndGlyphs" >Format</text>
<rect x="863.5" y="147.5" width="53" height="16" fill="#e5e5e5" stroke="#adadad" stroke-width="1"/>
<text x="866.5" y="158.25" font-size="8.5" fill="#000" textLength="19" lengthAdjust="spacingAndGlyphs" >Y - T</text>
<path d="M906.5 154.0 l3 3 l3 -3" fill="none" stroke="#444" stroke-width="0.9"/>
<ellipse cx="953.65" cy="133.5" rx="29.1" ry="27" fill="#f4f4f4" stroke="#3a3a3a" stroke-width="0.9"/>
<ellipse cx="953.65" cy="133.8" rx="27.4" ry="25.6" fill="#cdcdcd" stroke="#2a2a2a" stroke-width="0.9"/>
<path d="M970.65 119.30000000000001 A 24.6 23.4 0 0 1 940.15 154.3" fill="none" stroke="#b6b6b6" stroke-width="4.2"/>
<ellipse cx="953.65" cy="134.8" rx="22" ry="21.3" fill="#0000c8" stroke="#202020" stroke-width="0.5"/>
<path d="M928.85 158.8 L937.15 150.9 M973.05 150.9 L978.25 158.8" stroke="#202020" stroke-width="1.1"/>
<path d="M970.15 120.30000000000001 l3 -2" stroke="#303030" stroke-width="1"/>
<path d="M956.4 116.9 L954.6 130.4" stroke="#fffbe0" stroke-width="1.3"/>
<path d="M861.5 180.5 V278.5 H991.5 V180.5 H898.5 M866 180.5 H861.5" fill="none" stroke="#dcdcdc" stroke-width="1"/>
<text x="868" y="183.15" font-size="8.5" fill="#000" textLength="28.5" lengthAdjust="spacingAndGlyphs" >Vertical</text>
<rect x="863.5" y="193.5" width="53" height="16" fill="#e5e5e5" stroke="#adadad" stroke-width="1"/>
<text x="866.6" y="204.25" font-size="8.5" fill="#000" textLength="15.4" lengthAdjust="spacingAndGlyphs" >CH3</text>
<path d="M906.5 200.0 l3 3 l3 -3" fill="none" stroke="#444" stroke-width="0.9"/>
<rect x="863.5" y="215.5" width="53" height="16" fill="#fff" stroke="#adadad" stroke-width="1"/>
<rect x="903" y="216" width="13" height="15" fill="#f0f0f0"/>
<path d="M903 216 v15 M903 223.5 h13" stroke="#d0d0d0" stroke-width="0.8"/>
<path d="M907.5 221.5 l2 -2.5 l2 2.5 Z M907.5 226 l2 2.5 l2 -2.5 Z" fill="#303030"/>
<text x="868" y="226.35" font-size="8.5" fill="#000" textLength="26.2" lengthAdjust="spacingAndGlyphs" >5.00kV</text>
<rect x="863.5" y="236.5" width="53" height="16" fill="#cccccc" stroke="#cccccc" stroke-width="1"/>
<text x="866.6" y="247.25" font-size="8.5" fill="#a0a0a0" textLength="10.8" lengthAdjust="spacingAndGlyphs" >DC</text>
<path d="M906.5 243.0 l3 3 l3 -3" fill="none" stroke="#b0b0b0" stroke-width="0.9"/>
<rect x="863.5" y="258.5" width="53" height="16" fill="#e5e5e5" stroke="#adadad" stroke-width="1"/>
<text x="866.2" y="269.25" font-size="8.5" fill="#000" textLength="28" lengthAdjust="spacingAndGlyphs" >x10000</text>
<path d="M906.5 265.0 l3 3 l3 -3" fill="none" stroke="#444" stroke-width="0.9"/>
<rect x="931.5" y="196.5" width="10" height="10" fill="#fff" stroke="#333" stroke-width="1"/>
<path d="M933.5 201.5 l2.5 2.5 l4 -5.5" fill="none" stroke="#222" stroke-width="1.1"/>
<text x="943.7" y="205.15" font-size="8.5" fill="#000" textLength="29.3" lengthAdjust="spacingAndGlyphs" >ON/OFF</text>
<ellipse cx="953.65" cy="244.54999999999998" rx="29.1" ry="27" fill="#f4f4f4" stroke="#3a3a3a" stroke-width="0.9"/>
<ellipse cx="953.65" cy="244.85" rx="27.4" ry="25.6" fill="#cdcdcd" stroke="#2a2a2a" stroke-width="0.9"/>
<path d="M970.65 230.35 A 24.6 23.4 0 0 1 940.15 265.35" fill="none" stroke="#b6b6b6" stroke-width="4.2"/>
<ellipse cx="953.65" cy="245.85" rx="22" ry="21.3" fill="#ff00ff" stroke="#202020" stroke-width="0.5"/>
<path d="M928.85 269.85 L937.15 261.95 M973.05 261.95 L978.25 269.85" stroke="#202020" stroke-width="1.1"/>
<path d="M970.15 231.35 l3 -2" stroke="#303030" stroke-width="1"/>
<path d="M945 230.3 L951.9 242.2" stroke="#fffbe0" stroke-width="1.3"/>
<path d="M861.5 291.5 V448.5 H991.5 V291.5 H896 M866 291.5 H861.5" fill="none" stroke="#dcdcdc" stroke-width="1"/>
<text x="868" y="294.15" font-size="8.5" fill="#000" textLength="26" lengthAdjust="spacingAndGlyphs" >Trigger</text>
<text x="863.5" y="314.65" font-size="8.5" fill="#000" textLength="49" lengthAdjust="spacingAndGlyphs" >Trigger Mode</text>
<rect x="931.5" y="303.5" width="52" height="15.5" fill="#e5e5e5" stroke="#adadad" stroke-width="1"/>
<text x="934.7" y="314.0" font-size="8.5" fill="#000" textLength="18.4" lengthAdjust="spacingAndGlyphs" >Edge</text>
<path d="M973.5 309.75 l3 3 l3 -3" fill="none" stroke="#444" stroke-width="0.9"/>
<text x="863.5" y="338.15" font-size="8.5" fill="#000" textLength="56" lengthAdjust="spacingAndGlyphs" >Trigger Sweep</text>
<rect x="931.5" y="326.9" width="52" height="15.5" fill="#e5e5e5" stroke="#adadad" stroke-width="1"/>
<text x="934.7" y="337.4" font-size="8.5" fill="#000" textLength="22" lengthAdjust="spacingAndGlyphs" >AUTO</text>
<path d="M973.5 333.15 l3 3 l3 -3" fill="none" stroke="#444" stroke-width="0.9"/>
<text x="863.5" y="361.45" font-size="8.5" fill="#000" textLength="56" lengthAdjust="spacingAndGlyphs" >Trigger Source</text>
<rect x="931.5" y="350.0" width="52" height="15.5" fill="#e5e5e5" stroke="#adadad" stroke-width="1"/>
<text x="934.7" y="360.5" font-size="8.5" fill="#000" textLength="15.3" lengthAdjust="spacingAndGlyphs" >CH3</text>
<path d="M973.5 356.25 l3 3 l3 -3" fill="none" stroke="#444" stroke-width="0.9"/>
<text x="863.5" y="384.15" font-size="8.5" fill="#000" textLength="49.7" lengthAdjust="spacingAndGlyphs" >Trigger Slope</text>
<rect x="931.5" y="373.8" width="52" height="15.5" fill="#e5e5e5" stroke="#adadad" stroke-width="1"/>
<text x="934.7" y="384.3" font-size="8.5" fill="#000" >+</text>
<path d="M973.5 380.05 l3 3 l3 -3" fill="none" stroke="#444" stroke-width="0.9"/>
<path d="M861.5 461.0 V553.0 H991.5 V461.0 H932 M866 461.0 H861.5" fill="none" stroke="#dcdcdc" stroke-width="1"/>
<text x="868" y="463.65" font-size="8.5" fill="#000" textLength="62" lengthAdjust="spacingAndGlyphs" >Move Waveform</text>
<text x="862.6" y="482.45" font-size="8.5" fill="#a8a8a8" textLength="29.8" lengthAdjust="spacingAndGlyphs" >Length :</text>
<rect x="933.5" y="472.5" width="53" height="14" fill="#ececec" stroke="#c8c8c8" stroke-width="1"/>
<text x="950.6" y="482.45" font-size="8.5" fill="#a0a0a0" textLength="18.4" lengthAdjust="spacingAndGlyphs" >4000</text>
<text x="862.6" y="507.55" font-size="8.5" fill="#a8a8a8" textLength="17" lengthAdjust="spacingAndGlyphs" >Step</text>
<rect x="933.5" y="497.5" width="54" height="16" fill="#f0f0f0" stroke="#c8c8c8" stroke-width="1"/>
<path d="M974 498 v15 M974 505.5 h13" stroke="#d8d8d8" stroke-width="0.8"/>
<path d="M978.5 503.5 l2 -2.5 l2 2.5 Z M978.5 508 l2 2.5 l2 -2.5 Z" fill="#606060"/>
<text x="944.6" y="508.05" font-size="8.5" fill="#707070" textLength="18.4" lengthAdjust="spacingAndGlyphs" >1000</text>
<rect x="869.5" y="527" width="22" height="15" fill="#cccccc"/>
<text x="875" y="537.25" font-size="8.5" fill="#a0a0a0" textLength="9" lengthAdjust="spacingAndGlyphs" >|&lt;</text>
<rect x="894.5" y="527.5" width="64" height="14.5" fill="#f0f0f0" stroke="#c8c8c8" stroke-width="1"/>
<path d="M945 528 v14 M945 535 h13" stroke="#d8d8d8" stroke-width="0.8"/>
<path d="M949.5 533 l2 -2.5 l2 2.5 Z M949.5 537.5 l2 2.5 l2 -2.5 Z" fill="#606060"/>
<text x="910" y="537.25" font-size="8.5" fill="#707070" textLength="18.8" lengthAdjust="spacingAndGlyphs" >2000</text>
<rect x="961" y="527" width="22" height="15" fill="#cccccc"/>
<text x="967" y="537.25" font-size="8.5" fill="#a0a0a0" textLength="9" lengthAdjust="spacingAndGlyphs" >&gt;|</text>
<path d="M861.5 564.0 V670.5 H991.5 V564.0 H905 M866 564.0 H861.5" fill="none" stroke="#dcdcdc" stroke-width="1"/>
<text x="868" y="566.65" font-size="8.5" fill="#000" textLength="35" lengthAdjust="spacingAndGlyphs" >Recorder</text>
<text x="868" y="584.85" font-size="8.5" fill="#000" textLength="20.8" lengthAdjust="spacingAndGlyphs" >Path :</text>
<rect x="863.5" y="589" width="109.5" height="15.5" fill="#fff" stroke="#7a7a7a" stroke-width="1"/>
<text x="868" y="599.95" font-size="8.5" fill="#000" textLength="41.5" lengthAdjust="spacingAndGlyphs" >C:\data.drc</text>
<rect x="975" y="590" width="15.5" height="13.5" fill="#e5e5e5" stroke="#c0c0c0" stroke-width="1"/>
<text x="977.5" y="600.5" font-size="8" fill="#404040" >...</text>
<circle cx="872.9" cy="624.4" r="4.8" fill="#fff" stroke="#333" stroke-width="1"/><circle cx="872.9" cy="624.4" r="2.5" fill="#222"/>
<text x="880.6" y="627.65" font-size="8.5" fill="#000" textLength="29.4" lengthAdjust="spacingAndGlyphs" >Storage</text>
<circle cx="932" cy="624.4" r="4.8" fill="#fff" stroke="#333" stroke-width="1"/>
<text x="939.8" y="627.65" font-size="8.5" fill="#000" textLength="37.2" lengthAdjust="spacingAndGlyphs" >Play Back</text>
<rect x="924" y="646" width="60" height="1" fill="#d0d0d0" />
<rect x="996" y="73" width="4" height="584" fill="#f0f0f0" />
<rect x="857" y="73" width="143" height="1" fill="#e2e2e2" />
<rect x="995" y="74" width="1" height="573" fill="#fafafa" />
<rect x="996.5" y="88" width="3.5" height="479" fill="#cdcdcd" />
<path d="M999 79 l-2 2 l2 2" fill="none" stroke="#606060" stroke-width="1"/>
<rect x="6" y="656" width="994" height="10" fill="#f0f0f0" />
<rect x="6" y="656" width="851" height="2" fill="#fafafa" />
<rect x="6" y="658.5" width="994" height="1" fill="#e4e4e4" />
<rect x="6" y="665" width="300" height="1" fill="#d8d8d8" />
<rect x="306" y="665" width="694" height="1" fill="#b4b4b4" />
<rect x="906" y="659" width="1" height="6" fill="#c8c8c8" />
<text x="7.8" y="668.8" font-size="9" fill="#000" textLength="41" lengthAdjust="spacingAndGlyphs" >Connected</text>
<text x="910" y="668.8" font-size="9" fill="#000" textLength="70" lengthAdjust="spacingAndGlyphs" >30-12-2017 02:05</text>
<rect x="857" y="647.5" width="143" height="11" fill="#f0f0f0" />
<rect x="857" y="647" width="143" height="1" fill="#fafafa" />
<rect x="870.5" y="648" width="108.5" height="10" fill="#cdcdcd" />
<path d="M865.2 651.2 l-2.7 2.7 l2.7 2.7 M987.5 651.2 l2.7 2.7 l-2.7 2.7" fill="none" stroke="#555" stroke-width="1.3"/>
</svg></body></html>
